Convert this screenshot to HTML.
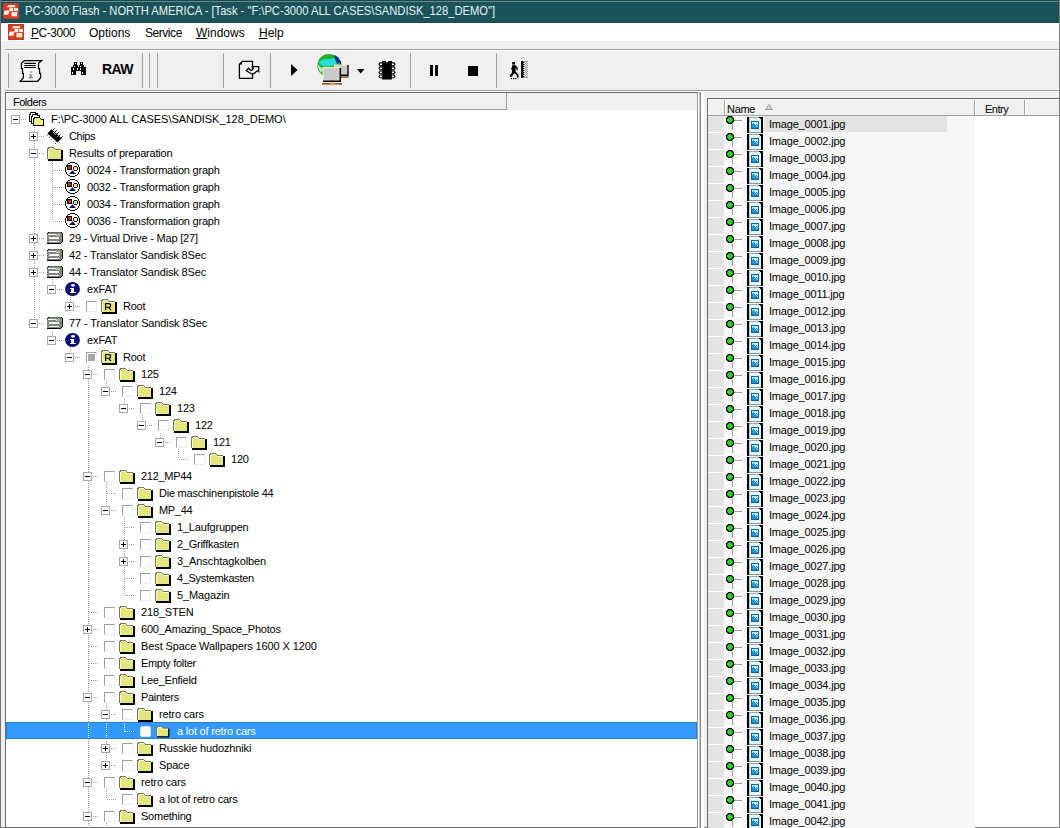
<!DOCTYPE html><html><head><meta charset="utf-8"><style>
*{margin:0;padding:0;box-sizing:border-box}
html,body{width:1060px;height:828px;overflow:hidden;background:#f0f0f0;font-family:"Liberation Sans",sans-serif;position:relative}
svg{position:absolute;overflow:visible}
.ab{position:absolute}
.t{position:absolute;white-space:pre;font-size:11px;line-height:13px;color:#000}
.m{position:absolute;white-space:pre;font-size:12px;line-height:14px;color:#000}
.box{position:absolute;width:9px;height:9px;border:1px solid #a8a8a8;background:#fff}
.box i{position:absolute;left:1px;top:3px;width:5px;height:1px;background:#000}
.box b{position:absolute;left:3px;top:1px;width:1px;height:5px;background:#000}
.cb{position:absolute;width:11px;height:11px;border-left:1px solid #a0a0a0;border-top:1px solid #a0a0a0;border-right:1px solid #eeeeee;border-bottom:1px solid #eeeeee;background:#fff}
.vd{position:absolute;width:1px;background-image:linear-gradient(#a0a0a0 50%,transparent 50%);background-size:1px 2px}
.hd{position:absolute;height:1px;background-image:linear-gradient(90deg,#a0a0a0 50%,transparent 50%);background-size:2px 1px}
.sep{position:absolute;top:53px;height:35px;width:1px;background:#a0a0a0}
.u{text-decoration:underline}
</style></head><body>
<div class="ab" style="left:0px;top:0px;width:1060px;height:23px;background:#1a535a;"></div>
<div class="ab" style="left:0px;top:0px;width:1060px;height:1px;background:#22474a;"></div>
<div class="ab" style="left:0px;top:1px;width:1060px;height:1px;background:#5c8c8c;"></div>
<div class="ab" style="left:0px;top:22px;width:1060px;height:1px;background:#1f4b50;"></div>
<div class="ab" style="left:0px;top:0px;width:1px;height:828px;background:#6f7575;"></div>
<div class="ab" style="left:1059px;top:0px;width:1px;height:828px;background:#808080;"></div>
<div class="ab" style="left:0px;top:827px;width:1060px;height:1px;background:#808080;"></div>
<svg style="left:3px;top:3px" width="16" height="16" viewBox="0 0 16 16"><rect x="0" y="0" width="16" height="16" fill="#dc3a1c"/><rect x="0.5" y="0.5" width="15" height="15" fill="none" stroke="#b04030" stroke-width="1"/><path d="M5.2 1.9H12.2V4.2H3.8Z" fill="#fbe2d8"/><path d="M6.6 4.7H10.1V8.3H6.1Z" fill="#fff0ea"/><path d="M10.8 5H15V8.1H10.8Z" fill="#fde8de"/><path d="M1.6 7.4H6.4L5.4 11.8H0.6Z" fill="#fff2ee"/><path d="M8.6 9H14.2V13.3H8.3Z" fill="#fde8de"/></svg>
<div class="m" style="left:25px;top:4px;color:#e8f4f4;font-size:12px;letter-spacing:0px;transform:scaleX(0.93);transform-origin:0 0">PC-3000 Flash - NORTH AMERICA - [Task - "F:\PC-3000 ALL CASES\SANDISK_128_DEMO"]</div>
<div class="ab" style="left:1px;top:23px;width:1058px;height:18px;background:#ffffff;"></div>
<svg style="left:8px;top:24px" width="16" height="16" viewBox="0 0 16 16"><rect x="0" y="0" width="16" height="16" fill="#dc3a1c"/><rect x="0.5" y="0.5" width="15" height="15" fill="none" stroke="#b04030" stroke-width="1"/><path d="M5.2 1.9H12.2V4.2H3.8Z" fill="#fbe2d8"/><path d="M6.6 4.7H10.1V8.3H6.1Z" fill="#fff0ea"/><path d="M10.8 5H15V8.1H10.8Z" fill="#fde8de"/><path d="M1.6 7.4H6.4L5.4 11.8H0.6Z" fill="#fff2ee"/><path d="M8.6 9H14.2V13.3H8.3Z" fill="#fde8de"/></svg>
<div class="m" style="left:31px;top:26px;letter-spacing:-0.45px"><span class="u">P</span>C-3000</div>
<div class="m" style="left:89px;top:26px;letter-spacing:0px">Options</div>
<div class="m" style="left:145px;top:26px;letter-spacing:-0.45px">Service</div>
<div class="m" style="left:196px;top:26px;letter-spacing:0px"><span class="u">W</span>indows</div>
<div class="m" style="left:259px;top:26px;letter-spacing:0px"><span class="u">H</span>elp</div>
<div class="ab" style="left:5px;top:49px;width:1054px;height:1px;background:#a0a0a0;"></div>
<div class="ab" style="left:5px;top:50px;width:1054px;height:1px;background:#ffffff;"></div>
<div class="ab" style="left:5px;top:90px;width:1054px;height:1px;background:#a0a0a0;"></div>
<div class="ab" style="left:5px;top:91px;width:1054px;height:1px;background:#ffffff;"></div>
<div class="sep" style="left:8px"></div>
<div class="sep" style="left:55px"></div>
<div class="sep" style="left:142px"></div>
<div class="sep" style="left:149px"></div>
<div class="sep" style="left:157px"></div>
<div class="sep" style="left:223px"></div>
<div class="sep" style="left:270px"></div>
<div class="sep" style="left:410px"></div>
<div class="sep" style="left:496px"></div>
<svg style="left:16px;top:56px" width="30" height="30" viewBox="0 0 30 30"><path d="M8.3 4.5H25.7L22.5 7.2V12.7H23.5V17.4H24.6V21.7L21.7 25.4H4.3L7.4 21.7V17.4H6.5V12.7H5.4V7.2Z" fill="#f6f6f6" stroke="#000" stroke-width="1.25" stroke-linejoin="miter"/><path d="M8.3 7.4H19.9M8.3 9.5H19.9M8.3 11.5H19.9" stroke="#000" stroke-width="1.1"/><rect x="14.2" y="15.2" width="1.6" height="1.6" fill="#8a8a8a"/><path d="M13.3 18.2H15.8V21H16.8V22.6H12.8V21H13.8V19.5H13.3Z" fill="#8a8a8a"/></svg>
<svg style="left:71px;top:62px" width="15" height="13" viewBox="0 0 15 13" shape-rendering="crispEdges"><path d="M3 0H6V3H7V5H8V3H9V0H12V3H13V5H15V13H10V9H5V13H0V5H2V3H3Z" fill="#000"/><g fill="#fff"><rect x="4" y="1" width="1" height="1"/><rect x="3" y="4" width="1" height="1"/><rect x="2" y="6" width="1" height="2"/><rect x="1" y="10" width="1" height="2"/><rect x="6" y="6" width="1" height="2"/><rect x="9" y="4" width="1" height="1"/><rect x="9" y="6" width="1" height="2"/><rect x="10" y="1" width="1" height="1"/><rect x="11" y="10" width="1" height="2"/></g></svg>
<div class="ab" style="left:102px;top:61px;font-size:14px;line-height:16px;font-weight:bold;letter-spacing:-0.6px;white-space:pre">RAW</div>
<svg style="left:234px;top:56px" width="30" height="30" viewBox="0 0 30 30"><path d="M8.3 5.4H18.5V22.3H5.4V8.3Z" fill="#f4f4f4" stroke="#000" stroke-width="1.3"/><path d="M7.6 6.4V8.2H6" fill="none" stroke="#000" stroke-width="0.9"/><path d="M12.2 14.6L14.6 12.2L16.8 14.4L18.2 14L19.3 12.2L18.4 10.6H24.7V15.6L23.5 14.6L20 17.5L17.2 17.7Z" fill="#fff" stroke="#000" stroke-width="1.3" stroke-linejoin="miter"/></svg>
<svg style="left:291px;top:64px" width="7" height="12" viewBox="0 0 7 12"><path d="M0 0L6.5 6L0 12Z" fill="#000"/></svg>
<svg style="left:312px;top:50px" width="44" height="40" viewBox="0 0 44 40"><circle cx="17" cy="15.5" r="11.6" fill="#20b02c"/><path d="M28 11 A11.6 11.6 0 0 1 26 23" fill="none" stroke="#000" stroke-width="1.2"/><path d="M6.5 12 Q12 8 18 9 Q23 8 27 7 L25 14 Q19 17 11 16 Q8 15 6.5 12Z" fill="#22e0d8"/><path d="M22 5 Q26 6 28.5 11 L25 14 Q23 10 22 5Z" fill="#1028a0"/><path d="M5.5 14 Q6 19 9 23 L11 19 Q8 17 5.5 14Z" fill="#c8e8c8"/><rect x="22.5" y="15" width="13.5" height="10" fill="#c8c8c8" stroke="#f2eebc" stroke-width="1"/><path d="M36 15V25.2H22.5" fill="none" stroke="#000" stroke-width="1.4"/><rect x="11" y="17.5" width="17" height="13.5" fill="#cacaca" stroke="#f4f0c0" stroke-width="1.1"/><path d="M28.3 18V31.3H11" fill="none" stroke="#000" stroke-width="1.5"/><path d="M10 33.8H30" stroke="#8a4a12" stroke-width="1.5"/><path d="M29 27H36.7" stroke="#8a4a12" stroke-width="1.5"/><rect x="18.5" y="32.6" width="4" height="2.6" fill="#e0a050"/></svg>
<svg style="left:357px;top:69px" width="8" height="5" viewBox="0 0 8 5"><path d="M0 0H7.5L3.75 4.5Z" fill="#000"/></svg>
<svg style="left:374px;top:56px" width="26" height="28" viewBox="0 0 26 28"><path d="M8.2 6.9H6L5 8.3L6 9.700000000000001H8.2" fill="#fff" stroke="#000" stroke-width="1.1"/><path d="M17.8 6.9H20L21 8.3L20 9.700000000000001H17.8" fill="#fff" stroke="#000" stroke-width="1.1"/><path d="M8.2 10.9H6L5 12.3L6 13.700000000000001H8.2" fill="#fff" stroke="#000" stroke-width="1.1"/><path d="M17.8 10.9H20L21 12.3L20 13.700000000000001H17.8" fill="#fff" stroke="#000" stroke-width="1.1"/><path d="M8.2 14.999999999999998H6L5 16.4L6 17.799999999999997H8.2" fill="#fff" stroke="#000" stroke-width="1.1"/><path d="M17.8 14.999999999999998H20L21 16.4L20 17.799999999999997H17.8" fill="#fff" stroke="#000" stroke-width="1.1"/><path d="M8.2 19.0H6L5 20.4L6 21.799999999999997H8.2" fill="#fff" stroke="#000" stroke-width="1.1"/><path d="M17.8 19.0H20L21 20.4L20 21.799999999999997H17.8" fill="#fff" stroke="#000" stroke-width="1.1"/><path d="M8.1 5.1H12V6.2H14V5.1H17.9V23.6H8.1Z" fill="#000"/></svg>
<div class="ab" style="left:430px;top:65px;width:3px;height:11px;background:#000;"></div>
<div class="ab" style="left:435px;top:65px;width:3px;height:11px;background:#000;"></div>
<div class="ab" style="left:468px;top:66px;width:10px;height:10px;background:#000;"></div>
<svg style="left:510px;top:61px" width="19" height="18" viewBox="0 0 19 18"><rect x="2.2" y="1" width="2.8" height="2.6" fill="#000"/><path d="M2 4.3H5.6L7.7 6.5V9.2H6.5V7.4L5.6 7V10.6L8.6 13.7V16.8H6.9V14.6L4.9 12.6L3.4 13.2L1.9 15.8H0V13.9L2 11.5V8.5L1.2 9V7.2L2 6.2Z" fill="#000"/><rect x="0.8" y="17" width="1.3" height="1.2" fill="#000"/><rect x="3" y="17" width="1.3" height="1.2" fill="#000"/><rect x="5.2" y="17" width="1.3" height="1.2" fill="#000"/></svg>
<svg style="left:521px;top:61px" width="7" height="17" viewBox="0 0 7 17" shape-rendering="crispEdges"><rect x="0" y="0" width="7" height="17" fill="#9a9a9a"/><rect x="4" y="1" width="1" height="1" fill="#e8e8e8"/><rect x="6" y="1" width="1" height="1" fill="#e8e8e8"/><rect x="3" y="2" width="1" height="1" fill="#e8e8e8"/><rect x="5" y="2" width="1" height="1" fill="#e8e8e8"/><rect x="4" y="3" width="1" height="1" fill="#e8e8e8"/><rect x="6" y="3" width="1" height="1" fill="#e8e8e8"/><rect x="3" y="4" width="1" height="1" fill="#e8e8e8"/><rect x="5" y="4" width="1" height="1" fill="#e8e8e8"/><rect x="4" y="5" width="1" height="1" fill="#e8e8e8"/><rect x="6" y="5" width="1" height="1" fill="#e8e8e8"/><rect x="3" y="6" width="1" height="1" fill="#e8e8e8"/><rect x="5" y="6" width="1" height="1" fill="#e8e8e8"/><rect x="4" y="7" width="1" height="1" fill="#e8e8e8"/><rect x="6" y="7" width="1" height="1" fill="#e8e8e8"/><rect x="3" y="8" width="1" height="1" fill="#e8e8e8"/><rect x="5" y="8" width="1" height="1" fill="#e8e8e8"/><rect x="4" y="9" width="1" height="1" fill="#e8e8e8"/><rect x="6" y="9" width="1" height="1" fill="#e8e8e8"/><rect x="3" y="10" width="1" height="1" fill="#e8e8e8"/><rect x="5" y="10" width="1" height="1" fill="#e8e8e8"/><rect x="4" y="11" width="1" height="1" fill="#e8e8e8"/><rect x="6" y="11" width="1" height="1" fill="#e8e8e8"/><rect x="3" y="12" width="1" height="1" fill="#e8e8e8"/><rect x="5" y="12" width="1" height="1" fill="#e8e8e8"/><rect x="4" y="13" width="1" height="1" fill="#e8e8e8"/><rect x="6" y="13" width="1" height="1" fill="#e8e8e8"/><rect x="3" y="14" width="1" height="1" fill="#e8e8e8"/><rect x="5" y="14" width="1" height="1" fill="#e8e8e8"/><rect x="4" y="15" width="1" height="1" fill="#e8e8e8"/><rect x="6" y="15" width="1" height="1" fill="#e8e8e8"/><rect x="0" y="0" width="2" height="17" fill="#000"/><rect x="2" y="1" width="1" height="1" fill="#000"/><rect x="2" y="3" width="1" height="1" fill="#000"/><rect x="2" y="5" width="1" height="1" fill="#000"/><rect x="2" y="7" width="1" height="1" fill="#000"/><rect x="2" y="9" width="1" height="1" fill="#000"/><rect x="2" y="11" width="1" height="1" fill="#000"/><rect x="2" y="13" width="1" height="1" fill="#000"/><rect x="2" y="15" width="1" height="1" fill="#000"/></svg>
<div class="ab" style="left:5px;top:92px;width:693px;height:736px;background:#696969;"></div>
<div class="ab" style="left:6px;top:93px;width:691px;height:734px;background:#ffffff;"></div>
<div class="ab" style="left:6px;top:93px;width:691px;height:17px;background:#f0f0f0;"></div>
<div class="ab" style="left:6px;top:93px;width:500px;height:1px;background:#ffffff;"></div>
<div class="ab" style="left:6px;top:93px;width:1px;height:16px;background:#ffffff;"></div>
<div class="ab" style="left:506px;top:93px;width:1px;height:17px;background:#a0a0a0;"></div>
<div class="ab" style="left:6px;top:109px;width:501px;height:1px;background:#a0a0a0;"></div>
<div class="t" style="left:13px;top:96px;letter-spacing:-0.5px">Folders</div>
<div class="ab" style="left:697px;top:92px;width:1px;height:736px;background:#9a9a9a;"></div>
<div class="ab" style="left:698px;top:92px;width:1px;height:736px;background:#ffffff;"></div>
<div class="ab" style="left:699px;top:92px;width:1px;height:736px;background:#c8c8c8;"></div>
<div class="ab" style="left:700px;top:92px;width:1px;height:736px;background:#8c8c8c;"></div>
<div class="ab" style="left:701px;top:92px;width:3px;height:736px;background:#ffffff;"></div>
<div class="ab" style="left:704px;top:93px;width:355px;height:734px;background:#f0f0f0;"></div>
<div class="ab" style="left:707px;top:98px;width:352px;height:729px;background:#696969;"></div>
<div class="ab" style="left:708px;top:99px;width:351px;height:728px;background:#ffffff;"></div>
<div class="ab" style="left:708px;top:99px;width:351px;height:16px;background:#f0f0f0;"></div>
<div class="ab" style="left:708px;top:115px;width:351px;height:1px;background:#a0a0a0;"></div>
<div class="ab" style="left:708px;top:99px;width:351px;height:1px;background:#ffffff;"></div>
<div class="ab" style="left:708px;top:99px;width:1px;height:16px;background:#ffffff;"></div>
<div class="ab" style="left:724px;top:100px;width:1px;height:15px;background:#a0a0a0;"></div>
<div class="ab" style="left:725px;top:100px;width:1px;height:15px;background:#ffffff;"></div>
<div class="ab" style="left:974px;top:100px;width:1px;height:15px;background:#a0a0a0;"></div>
<div class="ab" style="left:975px;top:100px;width:1px;height:15px;background:#ffffff;"></div>
<div class="ab" style="left:1024px;top:100px;width:1px;height:15px;background:#a0a0a0;"></div>
<div class="ab" style="left:1025px;top:100px;width:1px;height:15px;background:#ffffff;"></div>
<div class="t" style="left:727px;top:103px;letter-spacing:-0.3px">Name</div>
<svg style="left:765px;top:104px" width="8" height="6" viewBox="0 0 8 6"><path d="M0.5 5.5L4 0.5L7.5 5.5Z" fill="#d8d8d8" stroke="#9a9a9a" stroke-width="1"/></svg>
<div class="t" style="left:985px;top:103px;letter-spacing:-0.5px">Entry</div>
<div class="ab" style="left:6px;top:722px;width:691px;height:17px;background:#3399ff;border:1px solid #2a7ed4"></div>
<div class="vd" style="left:34px;top:127px;height:9px"></div>
<div class="vd" style="left:34px;top:127px;height:26px"></div>
<div class="vd" style="left:52px;top:161px;height:9px"></div>
<div class="vd" style="left:52px;top:161px;height:26px"></div>
<div class="vd" style="left:52px;top:161px;height:43px"></div>
<div class="vd" style="left:52px;top:161px;height:60px"></div>
<div class="vd" style="left:34px;top:127px;height:111px"></div>
<div class="vd" style="left:34px;top:127px;height:128px"></div>
<div class="vd" style="left:34px;top:127px;height:145px"></div>
<div class="vd" style="left:52px;top:279px;height:10px"></div>
<div class="vd" style="left:70px;top:297px;height:9px"></div>
<div class="vd" style="left:34px;top:127px;height:196px"></div>
<div class="vd" style="left:52px;top:331px;height:9px"></div>
<div class="vd" style="left:70px;top:347px;height:10px"></div>
<div class="vd" style="left:88px;top:365px;height:9px"></div>
<div class="vd" style="left:106px;top:381px;height:10px"></div>
<div class="vd" style="left:124px;top:399px;height:9px"></div>
<div class="vd" style="left:142px;top:415px;height:10px"></div>
<div class="vd" style="left:160px;top:433px;height:9px"></div>
<div class="vd" style="left:178px;top:449px;height:10px"></div>
<div class="vd" style="left:88px;top:365px;height:111px"></div>
<div class="vd" style="left:106px;top:483px;height:10px"></div>
<div class="vd" style="left:106px;top:483px;height:27px"></div>
<div class="vd" style="left:124px;top:517px;height:10px"></div>
<div class="vd" style="left:124px;top:517px;height:27px"></div>
<div class="vd" style="left:124px;top:517px;height:44px"></div>
<div class="vd" style="left:124px;top:517px;height:61px"></div>
<div class="vd" style="left:124px;top:517px;height:78px"></div>
<div class="vd" style="left:88px;top:365px;height:247px"></div>
<div class="vd" style="left:88px;top:365px;height:264px"></div>
<div class="vd" style="left:88px;top:365px;height:281px"></div>
<div class="vd" style="left:88px;top:365px;height:298px"></div>
<div class="vd" style="left:88px;top:365px;height:315px"></div>
<div class="vd" style="left:88px;top:365px;height:332px"></div>
<div class="vd" style="left:106px;top:705px;height:9px"></div>
<div class="vd" style="left:124px;top:721px;height:10px"></div>
<div class="vd" style="left:106px;top:705px;height:43px"></div>
<div class="vd" style="left:106px;top:705px;height:60px"></div>
<div class="vd" style="left:88px;top:365px;height:417px"></div>
<div class="vd" style="left:106px;top:789px;height:10px"></div>
<div class="vd" style="left:88px;top:365px;height:451px"></div>
<div class="vd" style="left:88px;top:817px;height:11px"></div>
<div class="vd" style="left:106px;top:823px;height:5px"></div>
<div class="hd" style="left:17px;top:119px;width:9px"></div>
<div class="box" style="left:11px;top:115px"><i></i></div>
<svg style="left:29px;top:112px" width="16" height="16" viewBox="0 0 16 16" shape-rendering="crispEdges"><path d="M0.5 9.5V2.5H1.5V0.5H6.5V1.5H8.5V9.5Z" fill="#fffbe6" stroke="#000"/><path d="M2.5 11.5V4.5H3.5V2.5H8.5V3.5H10.5V11.5Z" fill="#fffbe6" stroke="#000"/><path d="M4.5 13.5V6.5H5.5V5.5H10.5L12.5 7.5H14.5V13.5Z" fill="#eef088" stroke="#000" stroke-width="1.3"/></svg>
<div class="t" style="left:51px;top:113px;color:#000;letter-spacing:-0.041px">F:\PC-3000 ALL CASES\SANDISK_128_DEMO\</div>
<div class="hd" style="left:35px;top:136px;width:9px"></div>
<div class="box" style="left:29px;top:132px"><i></i><b></b></div>
<svg style="left:47px;top:127px" width="18" height="18" viewBox="0 0 18 18"><path d="M4.5 2.2L14.6 11.2L10.6 15.6L0.4 6.4Z" fill="#000"/><rect x="6" y="2" width="1" height="1" fill="#000"/><rect x="8" y="4" width="1" height="1" fill="#000"/><rect x="10" y="6" width="1" height="1" fill="#000"/><rect x="12" y="8" width="1" height="1" fill="#000"/><rect x="14" y="10" width="1" height="1" fill="#000"/><rect x="7" y="1" width="1" height="1" fill="#6a6a40"/><rect x="9" y="3" width="1" height="1" fill="#6a6a40"/><rect x="11" y="5" width="1" height="1" fill="#6a6a40"/><rect x="13" y="7" width="1" height="1" fill="#6a6a40"/><rect x="15" y="9" width="1" height="1" fill="#6a6a40"/><rect x="0" y="8" width="1" height="1" fill="#6a6a40"/><rect x="2" y="10" width="1" height="1" fill="#6a6a40"/><rect x="4" y="12" width="1" height="1" fill="#6a6a40"/><rect x="6" y="14" width="1" height="1" fill="#6a6a40"/><rect x="8" y="16" width="1" height="1" fill="#6a6a40"/><rect x="6" y="5" width="1" height="1" fill="#aaa"/><rect x="7" y="6" width="1" height="1" fill="#aaa"/><rect x="8" y="7" width="1" height="1" fill="#aaa"/><rect x="10" y="9" width="1" height="1" fill="#aaa"/></svg>
<div class="t" style="left:69px;top:130px;color:#000;letter-spacing:-0.425px">Chips</div>
<div class="hd" style="left:35px;top:153px;width:9px"></div>
<div class="box" style="left:29px;top:149px"><i></i></div>
<svg style="left:47px;top:147px" width="16" height="14" viewBox="0 0 16 14" shape-rendering="crispEdges"><path d="M1 1H7V2H8V3H14V12H1Z" fill="#e6e67e"/><rect x="1" y="1" width="6" height="1" fill="#f8f8c8"/><rect x="1" y="2" width="1" height="10" fill="#f8f8c8"/><rect x="8" y="3" width="6" height="1" fill="#f8f8c8"/><path d="M0.5 12V1.5H1.5V0.5H6.5L8.5 2.5H13.5" fill="none" stroke="#76765a" stroke-width="1"/><path d="M14 3H15.5V13.5H1V12H14Z" fill="#000"/></svg>
<div class="t" style="left:69px;top:147px;color:#000;letter-spacing:-0.19px">Results of preparation</div>
<div class="hd" style="left:53px;top:170px;width:9px"></div>
<svg style="left:65px;top:162px" width="15" height="15" viewBox="0 0 15 15" shape-rendering="crispEdges"><path d="M5 1H10V2H12V3H13V5H14V10H13V12H12V13H10V14H5V13H3V12H2V10H1V5H2V3H3V2H5Z" fill="#fff"/><path d="M5 0H10V1H12V2H13V3H14V5H15V10H14V12H13V13H12V14H10V15H5V14H3V13H2V12H1V10H0V5H1V3H2V2H3V1H5Z M5 1V2H3V3H2V5H1V10H2V12H3V13H5V14H10V13H12V12H13V10H14V5H13V3H12V2H10V1Z" fill="#000" fill-rule="evenodd"/><rect x="2" y="3" width="5" height="5" fill="#000"/><rect x="3" y="4" width="3" height="3" fill="#c8282c"/><path d="M9 4H12V5H13V8H12V9H9V8H8V5H9Z" fill="#000"/><rect x="9" y="5" width="3" height="3" fill="#eeee80"/></svg><svg style="left:65px;top:162px" width="15" height="15" viewBox="0 0 15 15"><path d="M7.5 8.2L11 12H4Z" fill="#10105e"/></svg>
<div class="t" style="left:87px;top:164px;color:#000;letter-spacing:-0.231px">0024 - Transformation graph</div>
<div class="hd" style="left:53px;top:187px;width:9px"></div>
<svg style="left:65px;top:179px" width="15" height="15" viewBox="0 0 15 15" shape-rendering="crispEdges"><path d="M5 1H10V2H12V3H13V5H14V10H13V12H12V13H10V14H5V13H3V12H2V10H1V5H2V3H3V2H5Z" fill="#fff"/><path d="M5 0H10V1H12V2H13V3H14V5H15V10H14V12H13V13H12V14H10V15H5V14H3V13H2V12H1V10H0V5H1V3H2V2H3V1H5Z M5 1V2H3V3H2V5H1V10H2V12H3V13H5V14H10V13H12V12H13V10H14V5H13V3H12V2H10V1Z" fill="#000" fill-rule="evenodd"/><rect x="2" y="3" width="5" height="5" fill="#000"/><rect x="3" y="4" width="3" height="3" fill="#c8282c"/><path d="M9 4H12V5H13V8H12V9H9V8H8V5H9Z" fill="#000"/><rect x="9" y="5" width="3" height="3" fill="#eeee80"/></svg><svg style="left:65px;top:179px" width="15" height="15" viewBox="0 0 15 15"><path d="M7.5 8.2L11 12H4Z" fill="#10105e"/></svg>
<div class="t" style="left:87px;top:181px;color:#000;letter-spacing:-0.231px">0032 - Transformation graph</div>
<div class="hd" style="left:53px;top:204px;width:9px"></div>
<svg style="left:65px;top:196px" width="15" height="15" viewBox="0 0 15 15" shape-rendering="crispEdges"><path d="M5 1H10V2H12V3H13V5H14V10H13V12H12V13H10V14H5V13H3V12H2V10H1V5H2V3H3V2H5Z" fill="#fff"/><path d="M5 0H10V1H12V2H13V3H14V5H15V10H14V12H13V13H12V14H10V15H5V14H3V13H2V12H1V10H0V5H1V3H2V2H3V1H5Z M5 1V2H3V3H2V5H1V10H2V12H3V13H5V14H10V13H12V12H13V10H14V5H13V3H12V2H10V1Z" fill="#000" fill-rule="evenodd"/><rect x="2" y="3" width="5" height="5" fill="#000"/><rect x="3" y="4" width="3" height="3" fill="#c8282c"/><path d="M9 4H12V5H13V8H12V9H9V8H8V5H9Z" fill="#000"/><rect x="9" y="5" width="3" height="3" fill="#eeee80"/></svg><svg style="left:65px;top:196px" width="15" height="15" viewBox="0 0 15 15"><path d="M7.5 8.2L11 12H4Z" fill="#10105e"/></svg>
<div class="t" style="left:87px;top:198px;color:#000;letter-spacing:-0.231px">0034 - Transformation graph</div>
<div class="hd" style="left:53px;top:221px;width:9px"></div>
<svg style="left:65px;top:213px" width="15" height="15" viewBox="0 0 15 15" shape-rendering="crispEdges"><path d="M5 1H10V2H12V3H13V5H14V10H13V12H12V13H10V14H5V13H3V12H2V10H1V5H2V3H3V2H5Z" fill="#fff"/><path d="M5 0H10V1H12V2H13V3H14V5H15V10H14V12H13V13H12V14H10V15H5V14H3V13H2V12H1V10H0V5H1V3H2V2H3V1H5Z M5 1V2H3V3H2V5H1V10H2V12H3V13H5V14H10V13H12V12H13V10H14V5H13V3H12V2H10V1Z" fill="#000" fill-rule="evenodd"/><rect x="2" y="3" width="5" height="5" fill="#000"/><rect x="3" y="4" width="3" height="3" fill="#c8282c"/><path d="M9 4H12V5H13V8H12V9H9V8H8V5H9Z" fill="#000"/><rect x="9" y="5" width="3" height="3" fill="#eeee80"/></svg><svg style="left:65px;top:213px" width="15" height="15" viewBox="0 0 15 15"><path d="M7.5 8.2L11 12H4Z" fill="#10105e"/></svg>
<div class="t" style="left:87px;top:215px;color:#000;letter-spacing:-0.231px">0036 - Transformation graph</div>
<div class="hd" style="left:35px;top:238px;width:9px"></div>
<div class="box" style="left:29px;top:234px"><i></i><b></b></div>
<svg style="left:47px;top:232px" width="16" height="12" viewBox="0 0 16 12" shape-rendering="crispEdges"><path d="M2 0H15V1H16V10H15V11H14V12H0V1H1V0Z" fill="#000"/><path d="M2 0H14V1H15V10H14V11H0V2H1V1H2Z" fill="#858585"/><rect x="2" y="0" width="12" height="1" fill="#6a6a6a"/><rect x="1" y="2" width="12" height="1" fill="#f6f6f6"/><rect x="2" y="5" width="10" height="2" fill="#fafafa"/><rect x="2" y="9" width="10" height="1" fill="#f6f6f6"/><rect x="9" y="2" width="4" height="2" fill="#9ad08a"/></svg>
<div class="t" style="left:69px;top:232px;color:#000;letter-spacing:-0.189px">29 - Virtual Drive - Map [27]</div>
<div class="hd" style="left:35px;top:255px;width:9px"></div>
<div class="box" style="left:29px;top:251px"><i></i><b></b></div>
<svg style="left:47px;top:249px" width="16" height="12" viewBox="0 0 16 12" shape-rendering="crispEdges"><path d="M2 0H15V1H16V10H15V11H14V12H0V1H1V0Z" fill="#000"/><path d="M2 0H14V1H15V10H14V11H0V2H1V1H2Z" fill="#858585"/><rect x="2" y="0" width="12" height="1" fill="#6a6a6a"/><rect x="1" y="2" width="12" height="1" fill="#f6f6f6"/><rect x="2" y="5" width="10" height="2" fill="#fafafa"/><rect x="2" y="9" width="10" height="1" fill="#f6f6f6"/><rect x="9" y="2" width="4" height="2" fill="#9ad08a"/></svg>
<div class="t" style="left:69px;top:249px;color:#000;letter-spacing:-0.152px">42 - Translator Sandisk 8Sec</div>
<div class="hd" style="left:35px;top:272px;width:9px"></div>
<div class="box" style="left:29px;top:268px"><i></i><b></b></div>
<svg style="left:47px;top:266px" width="16" height="12" viewBox="0 0 16 12" shape-rendering="crispEdges"><path d="M2 0H15V1H16V10H15V11H14V12H0V1H1V0Z" fill="#000"/><path d="M2 0H14V1H15V10H14V11H0V2H1V1H2Z" fill="#858585"/><rect x="2" y="0" width="12" height="1" fill="#6a6a6a"/><rect x="1" y="2" width="12" height="1" fill="#f6f6f6"/><rect x="2" y="5" width="10" height="2" fill="#fafafa"/><rect x="2" y="9" width="10" height="1" fill="#f6f6f6"/><rect x="9" y="2" width="4" height="2" fill="#9ad08a"/></svg>
<div class="t" style="left:69px;top:266px;color:#000;letter-spacing:-0.152px">44 - Translator Sandisk 8Sec</div>
<div class="hd" style="left:53px;top:289px;width:9px"></div>
<div class="box" style="left:47px;top:285px"><i></i></div>
<svg style="left:65px;top:282px" width="15" height="14" viewBox="0 0 15 14"><ellipse cx="7.5" cy="7" rx="7.4" ry="7" fill="#06065a"/><ellipse cx="7.5" cy="7" rx="6.4" ry="6" fill="#0c0c80"/><ellipse cx="8" cy="3.3" rx="2" ry="1.4" fill="#fff"/><path d="M5 6H9V10H10.8V11H5V10H6.2V7H5Z" fill="#fff"/></svg>
<div class="t" style="left:87px;top:283px;color:#000;letter-spacing:-0.1px">exFAT</div>
<div class="hd" style="left:71px;top:306px;width:9px"></div>
<div class="box" style="left:65px;top:302px"><i></i><b></b></div>
<div class="cb" style="left:86px;top:301px"></div>
<svg style="left:101px;top:299px" width="16" height="15" viewBox="0 0 16 15" shape-rendering="crispEdges"><path d="M1 1H7V2H8V3H14V13H1Z" fill="#e6e67e"/><rect x="1" y="1" width="6" height="1" fill="#f8f8c8"/><rect x="1" y="2" width="1" height="11" fill="#f8f8c8"/><rect x="8" y="3" width="6" height="1" fill="#f8f8c8"/><path d="M0.5 13V1.5H1.5V0.5H6.5L8.5 2.5H13.5" fill="none" stroke="#76765a" stroke-width="1"/><path d="M14 3H15.5V14.5H1V13H14Z" fill="#000"/><path d="M4.6 11V4.6H7.6Q9.6 4.6 9.6 6.4T7.6 8.2H4.6M7.4 8.2L9.9 11" fill="none" stroke="#000" stroke-width="1.15" shape-rendering="geometricPrecision"/></svg>
<div class="t" style="left:123px;top:300px;color:#000;letter-spacing:-0.267px">Root</div>
<div class="hd" style="left:35px;top:323px;width:9px"></div>
<div class="box" style="left:29px;top:319px"><i></i></div>
<svg style="left:47px;top:317px" width="16" height="12" viewBox="0 0 16 12" shape-rendering="crispEdges"><path d="M2 0H15V1H16V10H15V11H14V12H0V1H1V0Z" fill="#000"/><path d="M2 0H14V1H15V10H14V11H0V2H1V1H2Z" fill="#858585"/><rect x="2" y="0" width="12" height="1" fill="#6a6a6a"/><rect x="1" y="2" width="12" height="1" fill="#f6f6f6"/><rect x="2" y="5" width="10" height="2" fill="#fafafa"/><rect x="2" y="9" width="10" height="1" fill="#f6f6f6"/><rect x="9" y="2" width="4" height="2" fill="#9ad08a"/></svg>
<div class="t" style="left:69px;top:317px;color:#000;letter-spacing:-0.115px">77 - Translator Sandisk 8Sec</div>
<div class="hd" style="left:53px;top:340px;width:9px"></div>
<div class="box" style="left:47px;top:336px"><i></i></div>
<svg style="left:65px;top:333px" width="15" height="14" viewBox="0 0 15 14"><ellipse cx="7.5" cy="7" rx="7.4" ry="7" fill="#06065a"/><ellipse cx="7.5" cy="7" rx="6.4" ry="6" fill="#0c0c80"/><ellipse cx="8" cy="3.3" rx="2" ry="1.4" fill="#fff"/><path d="M5 6H9V10H10.8V11H5V10H6.2V7H5Z" fill="#fff"/></svg>
<div class="t" style="left:87px;top:334px;color:#000;letter-spacing:-0.1px">exFAT</div>
<div class="hd" style="left:71px;top:357px;width:9px"></div>
<div class="box" style="left:65px;top:353px"><i></i></div>
<div class="cb" style="left:86px;top:352px"><div class="ab" style="left:1px;top:1px;width:7px;height:7px;background:#a6a6a6"></div></div>
<svg style="left:101px;top:350px" width="16" height="15" viewBox="0 0 16 15" shape-rendering="crispEdges"><path d="M1 1H7V2H8V3H14V13H1Z" fill="#e6e67e"/><rect x="1" y="1" width="6" height="1" fill="#f8f8c8"/><rect x="1" y="2" width="1" height="11" fill="#f8f8c8"/><rect x="8" y="3" width="6" height="1" fill="#f8f8c8"/><path d="M0.5 13V1.5H1.5V0.5H6.5L8.5 2.5H13.5" fill="none" stroke="#76765a" stroke-width="1"/><path d="M14 3H15.5V14.5H1V13H14Z" fill="#000"/><path d="M4.6 11V4.6H7.6Q9.6 4.6 9.6 6.4T7.6 8.2H4.6M7.4 8.2L9.9 11" fill="none" stroke="#000" stroke-width="1.15" shape-rendering="geometricPrecision"/></svg>
<div class="t" style="left:123px;top:351px;color:#000;letter-spacing:-0.267px">Root</div>
<div class="hd" style="left:89px;top:374px;width:9px"></div>
<div class="box" style="left:83px;top:370px"><i></i></div>
<div class="cb" style="left:104px;top:369px"></div>
<svg style="left:119px;top:368px" width="16" height="14" viewBox="0 0 16 14" shape-rendering="crispEdges"><path d="M1 1H7V2H8V3H14V12H1Z" fill="#e6e67e"/><rect x="1" y="1" width="6" height="1" fill="#f8f8c8"/><rect x="1" y="2" width="1" height="10" fill="#f8f8c8"/><rect x="8" y="3" width="6" height="1" fill="#f8f8c8"/><path d="M0.5 12V1.5H1.5V0.5H6.5L8.5 2.5H13.5" fill="none" stroke="#76765a" stroke-width="1"/><path d="M14 3H15.5V13.5H1V12H14Z" fill="#000"/></svg>
<div class="t" style="left:141px;top:368px;color:#000;letter-spacing:-0.2px">125</div>
<div class="hd" style="left:107px;top:391px;width:9px"></div>
<div class="box" style="left:101px;top:387px"><i></i></div>
<div class="cb" style="left:122px;top:386px"></div>
<svg style="left:137px;top:385px" width="16" height="14" viewBox="0 0 16 14" shape-rendering="crispEdges"><path d="M1 1H7V2H8V3H14V12H1Z" fill="#e6e67e"/><rect x="1" y="1" width="6" height="1" fill="#f8f8c8"/><rect x="1" y="2" width="1" height="10" fill="#f8f8c8"/><rect x="8" y="3" width="6" height="1" fill="#f8f8c8"/><path d="M0.5 12V1.5H1.5V0.5H6.5L8.5 2.5H13.5" fill="none" stroke="#76765a" stroke-width="1"/><path d="M14 3H15.5V13.5H1V12H14Z" fill="#000"/></svg>
<div class="t" style="left:159px;top:385px;color:#000;letter-spacing:-0.2px">124</div>
<div class="hd" style="left:125px;top:408px;width:9px"></div>
<div class="box" style="left:119px;top:404px"><i></i></div>
<div class="cb" style="left:140px;top:403px"></div>
<svg style="left:155px;top:402px" width="16" height="14" viewBox="0 0 16 14" shape-rendering="crispEdges"><path d="M1 1H7V2H8V3H14V12H1Z" fill="#e6e67e"/><rect x="1" y="1" width="6" height="1" fill="#f8f8c8"/><rect x="1" y="2" width="1" height="10" fill="#f8f8c8"/><rect x="8" y="3" width="6" height="1" fill="#f8f8c8"/><path d="M0.5 12V1.5H1.5V0.5H6.5L8.5 2.5H13.5" fill="none" stroke="#76765a" stroke-width="1"/><path d="M14 3H15.5V13.5H1V12H14Z" fill="#000"/></svg>
<div class="t" style="left:177px;top:402px;color:#000;letter-spacing:-0.2px">123</div>
<div class="hd" style="left:143px;top:425px;width:9px"></div>
<div class="box" style="left:137px;top:421px"><i></i></div>
<div class="cb" style="left:158px;top:420px"></div>
<svg style="left:173px;top:419px" width="16" height="14" viewBox="0 0 16 14" shape-rendering="crispEdges"><path d="M1 1H7V2H8V3H14V12H1Z" fill="#e6e67e"/><rect x="1" y="1" width="6" height="1" fill="#f8f8c8"/><rect x="1" y="2" width="1" height="10" fill="#f8f8c8"/><rect x="8" y="3" width="6" height="1" fill="#f8f8c8"/><path d="M0.5 12V1.5H1.5V0.5H6.5L8.5 2.5H13.5" fill="none" stroke="#76765a" stroke-width="1"/><path d="M14 3H15.5V13.5H1V12H14Z" fill="#000"/></svg>
<div class="t" style="left:195px;top:419px;color:#000;letter-spacing:-0.2px">122</div>
<div class="hd" style="left:161px;top:442px;width:9px"></div>
<div class="box" style="left:155px;top:438px"><i></i></div>
<div class="cb" style="left:176px;top:437px"></div>
<svg style="left:191px;top:436px" width="16" height="14" viewBox="0 0 16 14" shape-rendering="crispEdges"><path d="M1 1H7V2H8V3H14V12H1Z" fill="#e6e67e"/><rect x="1" y="1" width="6" height="1" fill="#f8f8c8"/><rect x="1" y="2" width="1" height="10" fill="#f8f8c8"/><rect x="8" y="3" width="6" height="1" fill="#f8f8c8"/><path d="M0.5 12V1.5H1.5V0.5H6.5L8.5 2.5H13.5" fill="none" stroke="#76765a" stroke-width="1"/><path d="M14 3H15.5V13.5H1V12H14Z" fill="#000"/></svg>
<div class="t" style="left:213px;top:436px;color:#000;letter-spacing:-0.2px">121</div>
<div class="hd" style="left:179px;top:459px;width:9px"></div>
<div class="cb" style="left:194px;top:454px"></div>
<svg style="left:209px;top:453px" width="16" height="14" viewBox="0 0 16 14" shape-rendering="crispEdges"><path d="M1 1H7V2H8V3H14V12H1Z" fill="#e6e67e"/><rect x="1" y="1" width="6" height="1" fill="#f8f8c8"/><rect x="1" y="2" width="1" height="10" fill="#f8f8c8"/><rect x="8" y="3" width="6" height="1" fill="#f8f8c8"/><path d="M0.5 12V1.5H1.5V0.5H6.5L8.5 2.5H13.5" fill="none" stroke="#76765a" stroke-width="1"/><path d="M14 3H15.5V13.5H1V12H14Z" fill="#000"/></svg>
<div class="t" style="left:231px;top:453px;color:#000;letter-spacing:-0.2px">120</div>
<div class="hd" style="left:89px;top:476px;width:9px"></div>
<div class="box" style="left:83px;top:472px"><i></i></div>
<div class="cb" style="left:104px;top:471px"></div>
<svg style="left:119px;top:470px" width="16" height="14" viewBox="0 0 16 14" shape-rendering="crispEdges"><path d="M1 1H7V2H8V3H14V12H1Z" fill="#e6e67e"/><rect x="1" y="1" width="6" height="1" fill="#f8f8c8"/><rect x="1" y="2" width="1" height="10" fill="#f8f8c8"/><rect x="8" y="3" width="6" height="1" fill="#f8f8c8"/><path d="M0.5 12V1.5H1.5V0.5H6.5L8.5 2.5H13.5" fill="none" stroke="#76765a" stroke-width="1"/><path d="M14 3H15.5V13.5H1V12H14Z" fill="#000"/></svg>
<div class="t" style="left:141px;top:470px;color:#000;letter-spacing:-0.286px">212_MP44</div>
<div class="hd" style="left:107px;top:493px;width:9px"></div>
<div class="cb" style="left:122px;top:488px"></div>
<svg style="left:137px;top:487px" width="16" height="14" viewBox="0 0 16 14" shape-rendering="crispEdges"><path d="M1 1H7V2H8V3H14V12H1Z" fill="#e6e67e"/><rect x="1" y="1" width="6" height="1" fill="#f8f8c8"/><rect x="1" y="2" width="1" height="10" fill="#f8f8c8"/><rect x="8" y="3" width="6" height="1" fill="#f8f8c8"/><path d="M0.5 12V1.5H1.5V0.5H6.5L8.5 2.5H13.5" fill="none" stroke="#76765a" stroke-width="1"/><path d="M14 3H15.5V13.5H1V12H14Z" fill="#000"/></svg>
<div class="t" style="left:159px;top:487px;color:#000;letter-spacing:-0.236px">Die maschinenpistole 44</div>
<div class="hd" style="left:107px;top:510px;width:9px"></div>
<div class="box" style="left:101px;top:506px"><i></i></div>
<div class="cb" style="left:122px;top:505px"></div>
<svg style="left:137px;top:504px" width="16" height="14" viewBox="0 0 16 14" shape-rendering="crispEdges"><path d="M1 1H7V2H8V3H14V12H1Z" fill="#e6e67e"/><rect x="1" y="1" width="6" height="1" fill="#f8f8c8"/><rect x="1" y="2" width="1" height="10" fill="#f8f8c8"/><rect x="8" y="3" width="6" height="1" fill="#f8f8c8"/><path d="M0.5 12V1.5H1.5V0.5H6.5L8.5 2.5H13.5" fill="none" stroke="#76765a" stroke-width="1"/><path d="M14 3H15.5V13.5H1V12H14Z" fill="#000"/></svg>
<div class="t" style="left:159px;top:504px;color:#000;letter-spacing:-0.325px">MP_44</div>
<div class="hd" style="left:125px;top:527px;width:9px"></div>
<div class="cb" style="left:140px;top:522px"></div>
<svg style="left:155px;top:521px" width="16" height="14" viewBox="0 0 16 14" shape-rendering="crispEdges"><path d="M1 1H7V2H8V3H14V12H1Z" fill="#e6e67e"/><rect x="1" y="1" width="6" height="1" fill="#f8f8c8"/><rect x="1" y="2" width="1" height="10" fill="#f8f8c8"/><rect x="8" y="3" width="6" height="1" fill="#f8f8c8"/><path d="M0.5 12V1.5H1.5V0.5H6.5L8.5 2.5H13.5" fill="none" stroke="#76765a" stroke-width="1"/><path d="M14 3H15.5V13.5H1V12H14Z" fill="#000"/></svg>
<div class="t" style="left:177px;top:521px;color:#000;letter-spacing:-0.192px">1_Laufgruppen</div>
<div class="hd" style="left:125px;top:544px;width:9px"></div>
<div class="box" style="left:119px;top:540px"><i></i><b></b></div>
<div class="cb" style="left:140px;top:539px"></div>
<svg style="left:155px;top:538px" width="16" height="14" viewBox="0 0 16 14" shape-rendering="crispEdges"><path d="M1 1H7V2H8V3H14V12H1Z" fill="#e6e67e"/><rect x="1" y="1" width="6" height="1" fill="#f8f8c8"/><rect x="1" y="2" width="1" height="10" fill="#f8f8c8"/><rect x="8" y="3" width="6" height="1" fill="#f8f8c8"/><path d="M0.5 12V1.5H1.5V0.5H6.5L8.5 2.5H13.5" fill="none" stroke="#76765a" stroke-width="1"/><path d="M14 3H15.5V13.5H1V12H14Z" fill="#000"/></svg>
<div class="t" style="left:177px;top:538px;color:#000;letter-spacing:-0.267px">2_Griffkasten</div>
<div class="hd" style="left:125px;top:561px;width:9px"></div>
<div class="box" style="left:119px;top:557px"><i></i><b></b></div>
<div class="cb" style="left:140px;top:556px"></div>
<svg style="left:155px;top:555px" width="16" height="14" viewBox="0 0 16 14" shape-rendering="crispEdges"><path d="M1 1H7V2H8V3H14V12H1Z" fill="#e6e67e"/><rect x="1" y="1" width="6" height="1" fill="#f8f8c8"/><rect x="1" y="2" width="1" height="10" fill="#f8f8c8"/><rect x="8" y="3" width="6" height="1" fill="#f8f8c8"/><path d="M0.5 12V1.5H1.5V0.5H6.5L8.5 2.5H13.5" fill="none" stroke="#76765a" stroke-width="1"/><path d="M14 3H15.5V13.5H1V12H14Z" fill="#000"/></svg>
<div class="t" style="left:177px;top:555px;color:#000;letter-spacing:-0.087px">3_Anschtagkolben</div>
<div class="hd" style="left:125px;top:578px;width:9px"></div>
<div class="cb" style="left:140px;top:573px"></div>
<svg style="left:155px;top:572px" width="16" height="14" viewBox="0 0 16 14" shape-rendering="crispEdges"><path d="M1 1H7V2H8V3H14V12H1Z" fill="#e6e67e"/><rect x="1" y="1" width="6" height="1" fill="#f8f8c8"/><rect x="1" y="2" width="1" height="10" fill="#f8f8c8"/><rect x="8" y="3" width="6" height="1" fill="#f8f8c8"/><path d="M0.5 12V1.5H1.5V0.5H6.5L8.5 2.5H13.5" fill="none" stroke="#76765a" stroke-width="1"/><path d="M14 3H15.5V13.5H1V12H14Z" fill="#000"/></svg>
<div class="t" style="left:177px;top:572px;color:#000;letter-spacing:-0.323px">4_Systemkasten</div>
<div class="hd" style="left:125px;top:595px;width:9px"></div>
<div class="cb" style="left:140px;top:590px"></div>
<svg style="left:155px;top:589px" width="16" height="14" viewBox="0 0 16 14" shape-rendering="crispEdges"><path d="M1 1H7V2H8V3H14V12H1Z" fill="#e6e67e"/><rect x="1" y="1" width="6" height="1" fill="#f8f8c8"/><rect x="1" y="2" width="1" height="10" fill="#f8f8c8"/><rect x="8" y="3" width="6" height="1" fill="#f8f8c8"/><path d="M0.5 12V1.5H1.5V0.5H6.5L8.5 2.5H13.5" fill="none" stroke="#76765a" stroke-width="1"/><path d="M14 3H15.5V13.5H1V12H14Z" fill="#000"/></svg>
<div class="t" style="left:177px;top:589px;color:#000;letter-spacing:-0.138px">5_Magazin</div>
<div class="hd" style="left:89px;top:612px;width:9px"></div>
<div class="cb" style="left:104px;top:607px"></div>
<svg style="left:119px;top:606px" width="16" height="14" viewBox="0 0 16 14" shape-rendering="crispEdges"><path d="M1 1H7V2H8V3H14V12H1Z" fill="#e6e67e"/><rect x="1" y="1" width="6" height="1" fill="#f8f8c8"/><rect x="1" y="2" width="1" height="10" fill="#f8f8c8"/><rect x="8" y="3" width="6" height="1" fill="#f8f8c8"/><path d="M0.5 12V1.5H1.5V0.5H6.5L8.5 2.5H13.5" fill="none" stroke="#76765a" stroke-width="1"/><path d="M14 3H15.5V13.5H1V12H14Z" fill="#000"/></svg>
<div class="t" style="left:141px;top:606px;color:#000;letter-spacing:-0.157px">218_STEN</div>
<div class="hd" style="left:89px;top:629px;width:9px"></div>
<div class="box" style="left:83px;top:625px"><i></i><b></b></div>
<div class="cb" style="left:104px;top:624px"></div>
<svg style="left:119px;top:623px" width="16" height="14" viewBox="0 0 16 14" shape-rendering="crispEdges"><path d="M1 1H7V2H8V3H14V12H1Z" fill="#e6e67e"/><rect x="1" y="1" width="6" height="1" fill="#f8f8c8"/><rect x="1" y="2" width="1" height="10" fill="#f8f8c8"/><rect x="8" y="3" width="6" height="1" fill="#f8f8c8"/><path d="M0.5 12V1.5H1.5V0.5H6.5L8.5 2.5H13.5" fill="none" stroke="#76765a" stroke-width="1"/><path d="M14 3H15.5V13.5H1V12H14Z" fill="#000"/></svg>
<div class="t" style="left:141px;top:623px;color:#000;letter-spacing:-0.217px">600_Amazing_Space_Photos</div>
<div class="hd" style="left:89px;top:646px;width:9px"></div>
<div class="cb" style="left:104px;top:641px"></div>
<svg style="left:119px;top:640px" width="16" height="14" viewBox="0 0 16 14" shape-rendering="crispEdges"><path d="M1 1H7V2H8V3H14V12H1Z" fill="#e6e67e"/><rect x="1" y="1" width="6" height="1" fill="#f8f8c8"/><rect x="1" y="2" width="1" height="10" fill="#f8f8c8"/><rect x="8" y="3" width="6" height="1" fill="#f8f8c8"/><path d="M0.5 12V1.5H1.5V0.5H6.5L8.5 2.5H13.5" fill="none" stroke="#76765a" stroke-width="1"/><path d="M14 3H15.5V13.5H1V12H14Z" fill="#000"/></svg>
<div class="t" style="left:141px;top:640px;color:#000;letter-spacing:-0.109px">Best Space Wallpapers 1600 X 1200</div>
<div class="hd" style="left:89px;top:663px;width:9px"></div>
<div class="cb" style="left:104px;top:658px"></div>
<svg style="left:119px;top:657px" width="16" height="14" viewBox="0 0 16 14" shape-rendering="crispEdges"><path d="M1 1H7V2H8V3H14V12H1Z" fill="#e6e67e"/><rect x="1" y="1" width="6" height="1" fill="#f8f8c8"/><rect x="1" y="2" width="1" height="10" fill="#f8f8c8"/><rect x="8" y="3" width="6" height="1" fill="#f8f8c8"/><path d="M0.5 12V1.5H1.5V0.5H6.5L8.5 2.5H13.5" fill="none" stroke="#76765a" stroke-width="1"/><path d="M14 3H15.5V13.5H1V12H14Z" fill="#000"/></svg>
<div class="t" style="left:141px;top:657px;color:#000;letter-spacing:-0.327px">Empty folter</div>
<div class="hd" style="left:89px;top:680px;width:9px"></div>
<div class="cb" style="left:104px;top:675px"></div>
<svg style="left:119px;top:674px" width="16" height="14" viewBox="0 0 16 14" shape-rendering="crispEdges"><path d="M1 1H7V2H8V3H14V12H1Z" fill="#e6e67e"/><rect x="1" y="1" width="6" height="1" fill="#f8f8c8"/><rect x="1" y="2" width="1" height="10" fill="#f8f8c8"/><rect x="8" y="3" width="6" height="1" fill="#f8f8c8"/><path d="M0.5 12V1.5H1.5V0.5H6.5L8.5 2.5H13.5" fill="none" stroke="#76765a" stroke-width="1"/><path d="M14 3H15.5V13.5H1V12H14Z" fill="#000"/></svg>
<div class="t" style="left:141px;top:674px;color:#000;letter-spacing:-0.23px">Lee_Enfield</div>
<div class="hd" style="left:89px;top:697px;width:9px"></div>
<div class="box" style="left:83px;top:693px"><i></i></div>
<div class="cb" style="left:104px;top:692px"></div>
<svg style="left:119px;top:691px" width="16" height="14" viewBox="0 0 16 14" shape-rendering="crispEdges"><path d="M1 1H7V2H8V3H14V12H1Z" fill="#e6e67e"/><rect x="1" y="1" width="6" height="1" fill="#f8f8c8"/><rect x="1" y="2" width="1" height="10" fill="#f8f8c8"/><rect x="8" y="3" width="6" height="1" fill="#f8f8c8"/><path d="M0.5 12V1.5H1.5V0.5H6.5L8.5 2.5H13.5" fill="none" stroke="#76765a" stroke-width="1"/><path d="M14 3H15.5V13.5H1V12H14Z" fill="#000"/></svg>
<div class="t" style="left:141px;top:691px;color:#000;letter-spacing:-0.314px">Painters</div>
<div class="hd" style="left:107px;top:714px;width:9px"></div>
<div class="box" style="left:101px;top:710px"><i></i></div>
<div class="cb" style="left:122px;top:709px"></div>
<svg style="left:137px;top:708px" width="16" height="14" viewBox="0 0 16 14" shape-rendering="crispEdges"><path d="M1 1H7V2H8V3H14V12H1Z" fill="#e6e67e"/><rect x="1" y="1" width="6" height="1" fill="#f8f8c8"/><rect x="1" y="2" width="1" height="10" fill="#f8f8c8"/><rect x="8" y="3" width="6" height="1" fill="#f8f8c8"/><path d="M0.5 12V1.5H1.5V0.5H6.5L8.5 2.5H13.5" fill="none" stroke="#76765a" stroke-width="1"/><path d="M14 3H15.5V13.5H1V12H14Z" fill="#000"/></svg>
<div class="t" style="left:159px;top:708px;color:#000;letter-spacing:-0.156px">retro cars</div>
<div class="hd" style="left:125px;top:731px;width:9px;background-image:linear-gradient(90deg,#e8fbff 50%,transparent 50%)"></div>
<div class="cb" style="left:140px;top:726px;border:1px solid #cfeaff;border-radius:2px"></div>
<svg style="left:156px;top:726px" width="14" height="12" viewBox="0 0 16 14"><path d="M1 1H7V2H8V3H14V12H1Z" fill="#e6e67e"/><rect x="1" y="1" width="6" height="1" fill="#f8f8c8"/><rect x="1" y="2" width="1" height="10" fill="#f8f8c8"/><rect x="8" y="3" width="6" height="1" fill="#f8f8c8"/><path d="M0.5 12V1.5H1.5V0.5H6.5L8.5 2.5H13.5" fill="none" stroke="#76765a" stroke-width="1"/><path d="M14 3H15.5V13.5H1V12H14Z" fill="#000"/></svg>
<div class="t" style="left:177px;top:725px;color:#fff;letter-spacing:-0.206px">a lot of retro cars</div>
<div class="hd" style="left:107px;top:748px;width:9px"></div>
<div class="box" style="left:101px;top:744px"><i></i><b></b></div>
<div class="cb" style="left:122px;top:743px"></div>
<svg style="left:137px;top:742px" width="16" height="14" viewBox="0 0 16 14" shape-rendering="crispEdges"><path d="M1 1H7V2H8V3H14V12H1Z" fill="#e6e67e"/><rect x="1" y="1" width="6" height="1" fill="#f8f8c8"/><rect x="1" y="2" width="1" height="10" fill="#f8f8c8"/><rect x="8" y="3" width="6" height="1" fill="#f8f8c8"/><path d="M0.5 12V1.5H1.5V0.5H6.5L8.5 2.5H13.5" fill="none" stroke="#76765a" stroke-width="1"/><path d="M14 3H15.5V13.5H1V12H14Z" fill="#000"/></svg>
<div class="t" style="left:159px;top:742px;color:#000;letter-spacing:-0.141px">Russkie hudozhniki</div>
<div class="hd" style="left:107px;top:765px;width:9px"></div>
<div class="box" style="left:101px;top:761px"><i></i><b></b></div>
<div class="cb" style="left:122px;top:760px"></div>
<svg style="left:137px;top:759px" width="16" height="14" viewBox="0 0 16 14" shape-rendering="crispEdges"><path d="M1 1H7V2H8V3H14V12H1Z" fill="#e6e67e"/><rect x="1" y="1" width="6" height="1" fill="#f8f8c8"/><rect x="1" y="2" width="1" height="10" fill="#f8f8c8"/><rect x="8" y="3" width="6" height="1" fill="#f8f8c8"/><path d="M0.5 12V1.5H1.5V0.5H6.5L8.5 2.5H13.5" fill="none" stroke="#76765a" stroke-width="1"/><path d="M14 3H15.5V13.5H1V12H14Z" fill="#000"/></svg>
<div class="t" style="left:159px;top:759px;color:#000;letter-spacing:-0.15px">Space</div>
<div class="hd" style="left:89px;top:782px;width:9px"></div>
<div class="box" style="left:83px;top:778px"><i></i></div>
<div class="cb" style="left:104px;top:777px"></div>
<svg style="left:119px;top:776px" width="16" height="14" viewBox="0 0 16 14" shape-rendering="crispEdges"><path d="M1 1H7V2H8V3H14V12H1Z" fill="#e6e67e"/><rect x="1" y="1" width="6" height="1" fill="#f8f8c8"/><rect x="1" y="2" width="1" height="10" fill="#f8f8c8"/><rect x="8" y="3" width="6" height="1" fill="#f8f8c8"/><path d="M0.5 12V1.5H1.5V0.5H6.5L8.5 2.5H13.5" fill="none" stroke="#76765a" stroke-width="1"/><path d="M14 3H15.5V13.5H1V12H14Z" fill="#000"/></svg>
<div class="t" style="left:141px;top:776px;color:#000;letter-spacing:-0.156px">retro cars</div>
<div class="hd" style="left:107px;top:799px;width:9px"></div>
<div class="cb" style="left:122px;top:794px"></div>
<svg style="left:137px;top:793px" width="16" height="14" viewBox="0 0 16 14" shape-rendering="crispEdges"><path d="M1 1H7V2H8V3H14V12H1Z" fill="#e6e67e"/><rect x="1" y="1" width="6" height="1" fill="#f8f8c8"/><rect x="1" y="2" width="1" height="10" fill="#f8f8c8"/><rect x="8" y="3" width="6" height="1" fill="#f8f8c8"/><path d="M0.5 12V1.5H1.5V0.5H6.5L8.5 2.5H13.5" fill="none" stroke="#76765a" stroke-width="1"/><path d="M14 3H15.5V13.5H1V12H14Z" fill="#000"/></svg>
<div class="t" style="left:159px;top:793px;color:#000;letter-spacing:-0.206px">a lot of retro cars</div>
<div class="hd" style="left:89px;top:816px;width:9px"></div>
<div class="box" style="left:83px;top:812px"><i></i></div>
<div class="cb" style="left:104px;top:811px"></div>
<svg style="left:119px;top:810px" width="16" height="14" viewBox="0 0 16 14" shape-rendering="crispEdges"><path d="M1 1H7V2H8V3H14V12H1Z" fill="#e6e67e"/><rect x="1" y="1" width="6" height="1" fill="#f8f8c8"/><rect x="1" y="2" width="1" height="10" fill="#f8f8c8"/><rect x="8" y="3" width="6" height="1" fill="#f8f8c8"/><path d="M0.5 12V1.5H1.5V0.5H6.5L8.5 2.5H13.5" fill="none" stroke="#76765a" stroke-width="1"/><path d="M14 3H15.5V13.5H1V12H14Z" fill="#000"/></svg>
<div class="t" style="left:141px;top:810px;color:#000;letter-spacing:-0.237px">Something</div>
<div class="vd" style="left:88px;top:723px;height:15px;background-image:linear-gradient(#e8fbff 50%,transparent 50%)"></div>
<div class="vd" style="left:106px;top:723px;height:15px;background-image:linear-gradient(#e8fbff 50%,transparent 50%)"></div>
<div class="vd" style="left:124px;top:723px;height:9px;background-image:linear-gradient(#e8fbff 50%,transparent 50%)"></div>
<div class="ab" style="left:708px;top:116px;width:16px;height:16px;background:#e3e3e3;"></div>
<div class="ab" style="left:708px;top:132px;width:16px;height:1px;background:#ffffff;"></div>
<div class="ab" style="left:724px;top:116px;width:251px;height:17px;background:#f7f7f7;"></div>
<div class="ab" style="left:764px;top:116px;width:183px;height:16px;background:#e3e3e3;"></div>
<div class="ab" style="left:734px;top:121px;width:8px;height:10px;background:#fdfdfd;"></div>
<div class="ab" style="left:734px;top:120px;width:8px;height:1px;background:#a0a0a0;"></div>
<div class="ab" style="left:732px;top:124px;width:1px;height:6px;background:#a0a0a0;"></div>
<svg style="left:726px;top:116px" width="8" height="8" viewBox="0 0 8 8"><path d="M2.6 0.6H5.4L7.4 2.6V5.4L5.4 7.4H2.6L0.6 5.4V2.6Z" fill="#30d030" stroke="#000" stroke-width="1.2"/></svg>
<svg style="left:747px;top:117px" width="16" height="16" viewBox="0 0 16 16" shape-rendering="crispEdges"><rect x="2" y="0" width="12" height="16" fill="#e4f8fc"/><rect x="2" y="0" width="10" height="1" fill="#9aa8aa"/><rect x="2" y="15" width="12" height="1" fill="#8a9a9c"/><rect x="2" y="1" width="1" height="14" fill="#c0d0d2"/><rect x="0" y="0" width="2" height="16" fill="#000"/><rect x="14" y="0" width="2" height="16" fill="#000"/><path d="M12 0H14V2H13V1H12Z" fill="#000"/><rect x="4" y="4" width="8" height="8" fill="#13649a"/><rect x="5" y="5" width="6" height="6" fill="#2a8fd2"/><path d="M5 5H11V8H10V7H9V8H8V7H7V6H6V7H5Z" fill="#b4f2ff"/><path d="M9 8H10V9H11V10H10V9H9Z" fill="#90e0f8"/></svg>
<div class="t" style="left:769px;top:118px;letter-spacing:-0.19px">Image_0001.jpg</div>
<div class="ab" style="left:708px;top:133px;width:16px;height:16px;background:#e3e3e3;"></div>
<div class="ab" style="left:708px;top:149px;width:16px;height:1px;background:#ffffff;"></div>
<div class="ab" style="left:724px;top:133px;width:251px;height:17px;background:#f7f7f7;"></div>
<div class="ab" style="left:734px;top:138px;width:8px;height:10px;background:#fdfdfd;"></div>
<div class="ab" style="left:734px;top:137px;width:8px;height:1px;background:#a0a0a0;"></div>
<div class="ab" style="left:732px;top:141px;width:1px;height:6px;background:#a0a0a0;"></div>
<svg style="left:726px;top:133px" width="8" height="8" viewBox="0 0 8 8"><path d="M2.6 0.6H5.4L7.4 2.6V5.4L5.4 7.4H2.6L0.6 5.4V2.6Z" fill="#30d030" stroke="#000" stroke-width="1.2"/></svg>
<svg style="left:747px;top:134px" width="16" height="16" viewBox="0 0 16 16" shape-rendering="crispEdges"><rect x="2" y="0" width="12" height="16" fill="#e4f8fc"/><rect x="2" y="0" width="10" height="1" fill="#9aa8aa"/><rect x="2" y="15" width="12" height="1" fill="#8a9a9c"/><rect x="2" y="1" width="1" height="14" fill="#c0d0d2"/><rect x="0" y="0" width="2" height="16" fill="#000"/><rect x="14" y="0" width="2" height="16" fill="#000"/><path d="M12 0H14V2H13V1H12Z" fill="#000"/><rect x="4" y="4" width="8" height="8" fill="#13649a"/><rect x="5" y="5" width="6" height="6" fill="#2a8fd2"/><path d="M5 5H11V8H10V7H9V8H8V7H7V6H6V7H5Z" fill="#b4f2ff"/><path d="M9 8H10V9H11V10H10V9H9Z" fill="#90e0f8"/></svg>
<div class="t" style="left:769px;top:135px;letter-spacing:-0.19px">Image_0002.jpg</div>
<div class="ab" style="left:708px;top:150px;width:16px;height:16px;background:#e3e3e3;"></div>
<div class="ab" style="left:708px;top:166px;width:16px;height:1px;background:#ffffff;"></div>
<div class="ab" style="left:724px;top:150px;width:251px;height:17px;background:#f7f7f7;"></div>
<div class="ab" style="left:734px;top:155px;width:8px;height:10px;background:#fdfdfd;"></div>
<div class="ab" style="left:734px;top:154px;width:8px;height:1px;background:#a0a0a0;"></div>
<div class="ab" style="left:732px;top:158px;width:1px;height:6px;background:#a0a0a0;"></div>
<svg style="left:726px;top:150px" width="8" height="8" viewBox="0 0 8 8"><path d="M2.6 0.6H5.4L7.4 2.6V5.4L5.4 7.4H2.6L0.6 5.4V2.6Z" fill="#30d030" stroke="#000" stroke-width="1.2"/></svg>
<svg style="left:747px;top:151px" width="16" height="16" viewBox="0 0 16 16" shape-rendering="crispEdges"><rect x="2" y="0" width="12" height="16" fill="#e4f8fc"/><rect x="2" y="0" width="10" height="1" fill="#9aa8aa"/><rect x="2" y="15" width="12" height="1" fill="#8a9a9c"/><rect x="2" y="1" width="1" height="14" fill="#c0d0d2"/><rect x="0" y="0" width="2" height="16" fill="#000"/><rect x="14" y="0" width="2" height="16" fill="#000"/><path d="M12 0H14V2H13V1H12Z" fill="#000"/><rect x="4" y="4" width="8" height="8" fill="#13649a"/><rect x="5" y="5" width="6" height="6" fill="#2a8fd2"/><path d="M5 5H11V8H10V7H9V8H8V7H7V6H6V7H5Z" fill="#b4f2ff"/><path d="M9 8H10V9H11V10H10V9H9Z" fill="#90e0f8"/></svg>
<div class="t" style="left:769px;top:152px;letter-spacing:-0.19px">Image_0003.jpg</div>
<div class="ab" style="left:708px;top:167px;width:16px;height:16px;background:#e3e3e3;"></div>
<div class="ab" style="left:708px;top:183px;width:16px;height:1px;background:#ffffff;"></div>
<div class="ab" style="left:724px;top:167px;width:251px;height:17px;background:#f7f7f7;"></div>
<div class="ab" style="left:734px;top:172px;width:8px;height:10px;background:#fdfdfd;"></div>
<div class="ab" style="left:734px;top:171px;width:8px;height:1px;background:#a0a0a0;"></div>
<div class="ab" style="left:732px;top:175px;width:1px;height:6px;background:#a0a0a0;"></div>
<svg style="left:726px;top:167px" width="8" height="8" viewBox="0 0 8 8"><path d="M2.6 0.6H5.4L7.4 2.6V5.4L5.4 7.4H2.6L0.6 5.4V2.6Z" fill="#30d030" stroke="#000" stroke-width="1.2"/></svg>
<svg style="left:747px;top:168px" width="16" height="16" viewBox="0 0 16 16" shape-rendering="crispEdges"><rect x="2" y="0" width="12" height="16" fill="#e4f8fc"/><rect x="2" y="0" width="10" height="1" fill="#9aa8aa"/><rect x="2" y="15" width="12" height="1" fill="#8a9a9c"/><rect x="2" y="1" width="1" height="14" fill="#c0d0d2"/><rect x="0" y="0" width="2" height="16" fill="#000"/><rect x="14" y="0" width="2" height="16" fill="#000"/><path d="M12 0H14V2H13V1H12Z" fill="#000"/><rect x="4" y="4" width="8" height="8" fill="#13649a"/><rect x="5" y="5" width="6" height="6" fill="#2a8fd2"/><path d="M5 5H11V8H10V7H9V8H8V7H7V6H6V7H5Z" fill="#b4f2ff"/><path d="M9 8H10V9H11V10H10V9H9Z" fill="#90e0f8"/></svg>
<div class="t" style="left:769px;top:169px;letter-spacing:-0.19px">Image_0004.jpg</div>
<div class="ab" style="left:708px;top:184px;width:16px;height:16px;background:#e3e3e3;"></div>
<div class="ab" style="left:708px;top:200px;width:16px;height:1px;background:#ffffff;"></div>
<div class="ab" style="left:724px;top:184px;width:251px;height:17px;background:#f7f7f7;"></div>
<div class="ab" style="left:734px;top:189px;width:8px;height:10px;background:#fdfdfd;"></div>
<div class="ab" style="left:734px;top:188px;width:8px;height:1px;background:#a0a0a0;"></div>
<div class="ab" style="left:732px;top:192px;width:1px;height:6px;background:#a0a0a0;"></div>
<svg style="left:726px;top:184px" width="8" height="8" viewBox="0 0 8 8"><path d="M2.6 0.6H5.4L7.4 2.6V5.4L5.4 7.4H2.6L0.6 5.4V2.6Z" fill="#30d030" stroke="#000" stroke-width="1.2"/></svg>
<svg style="left:747px;top:185px" width="16" height="16" viewBox="0 0 16 16" shape-rendering="crispEdges"><rect x="2" y="0" width="12" height="16" fill="#e4f8fc"/><rect x="2" y="0" width="10" height="1" fill="#9aa8aa"/><rect x="2" y="15" width="12" height="1" fill="#8a9a9c"/><rect x="2" y="1" width="1" height="14" fill="#c0d0d2"/><rect x="0" y="0" width="2" height="16" fill="#000"/><rect x="14" y="0" width="2" height="16" fill="#000"/><path d="M12 0H14V2H13V1H12Z" fill="#000"/><rect x="4" y="4" width="8" height="8" fill="#13649a"/><rect x="5" y="5" width="6" height="6" fill="#2a8fd2"/><path d="M5 5H11V8H10V7H9V8H8V7H7V6H6V7H5Z" fill="#b4f2ff"/><path d="M9 8H10V9H11V10H10V9H9Z" fill="#90e0f8"/></svg>
<div class="t" style="left:769px;top:186px;letter-spacing:-0.19px">Image_0005.jpg</div>
<div class="ab" style="left:708px;top:201px;width:16px;height:16px;background:#e3e3e3;"></div>
<div class="ab" style="left:708px;top:217px;width:16px;height:1px;background:#ffffff;"></div>
<div class="ab" style="left:724px;top:201px;width:251px;height:17px;background:#f7f7f7;"></div>
<div class="ab" style="left:734px;top:206px;width:8px;height:10px;background:#fdfdfd;"></div>
<div class="ab" style="left:734px;top:205px;width:8px;height:1px;background:#a0a0a0;"></div>
<div class="ab" style="left:732px;top:209px;width:1px;height:6px;background:#a0a0a0;"></div>
<svg style="left:726px;top:201px" width="8" height="8" viewBox="0 0 8 8"><path d="M2.6 0.6H5.4L7.4 2.6V5.4L5.4 7.4H2.6L0.6 5.4V2.6Z" fill="#30d030" stroke="#000" stroke-width="1.2"/></svg>
<svg style="left:747px;top:202px" width="16" height="16" viewBox="0 0 16 16" shape-rendering="crispEdges"><rect x="2" y="0" width="12" height="16" fill="#e4f8fc"/><rect x="2" y="0" width="10" height="1" fill="#9aa8aa"/><rect x="2" y="15" width="12" height="1" fill="#8a9a9c"/><rect x="2" y="1" width="1" height="14" fill="#c0d0d2"/><rect x="0" y="0" width="2" height="16" fill="#000"/><rect x="14" y="0" width="2" height="16" fill="#000"/><path d="M12 0H14V2H13V1H12Z" fill="#000"/><rect x="4" y="4" width="8" height="8" fill="#13649a"/><rect x="5" y="5" width="6" height="6" fill="#2a8fd2"/><path d="M5 5H11V8H10V7H9V8H8V7H7V6H6V7H5Z" fill="#b4f2ff"/><path d="M9 8H10V9H11V10H10V9H9Z" fill="#90e0f8"/></svg>
<div class="t" style="left:769px;top:203px;letter-spacing:-0.19px">Image_0006.jpg</div>
<div class="ab" style="left:708px;top:218px;width:16px;height:16px;background:#e3e3e3;"></div>
<div class="ab" style="left:708px;top:234px;width:16px;height:1px;background:#ffffff;"></div>
<div class="ab" style="left:724px;top:218px;width:251px;height:17px;background:#f7f7f7;"></div>
<div class="ab" style="left:734px;top:223px;width:8px;height:10px;background:#fdfdfd;"></div>
<div class="ab" style="left:734px;top:222px;width:8px;height:1px;background:#a0a0a0;"></div>
<div class="ab" style="left:732px;top:226px;width:1px;height:6px;background:#a0a0a0;"></div>
<svg style="left:726px;top:218px" width="8" height="8" viewBox="0 0 8 8"><path d="M2.6 0.6H5.4L7.4 2.6V5.4L5.4 7.4H2.6L0.6 5.4V2.6Z" fill="#30d030" stroke="#000" stroke-width="1.2"/></svg>
<svg style="left:747px;top:219px" width="16" height="16" viewBox="0 0 16 16" shape-rendering="crispEdges"><rect x="2" y="0" width="12" height="16" fill="#e4f8fc"/><rect x="2" y="0" width="10" height="1" fill="#9aa8aa"/><rect x="2" y="15" width="12" height="1" fill="#8a9a9c"/><rect x="2" y="1" width="1" height="14" fill="#c0d0d2"/><rect x="0" y="0" width="2" height="16" fill="#000"/><rect x="14" y="0" width="2" height="16" fill="#000"/><path d="M12 0H14V2H13V1H12Z" fill="#000"/><rect x="4" y="4" width="8" height="8" fill="#13649a"/><rect x="5" y="5" width="6" height="6" fill="#2a8fd2"/><path d="M5 5H11V8H10V7H9V8H8V7H7V6H6V7H5Z" fill="#b4f2ff"/><path d="M9 8H10V9H11V10H10V9H9Z" fill="#90e0f8"/></svg>
<div class="t" style="left:769px;top:220px;letter-spacing:-0.19px">Image_0007.jpg</div>
<div class="ab" style="left:708px;top:235px;width:16px;height:16px;background:#e3e3e3;"></div>
<div class="ab" style="left:708px;top:251px;width:16px;height:1px;background:#ffffff;"></div>
<div class="ab" style="left:724px;top:235px;width:251px;height:17px;background:#f7f7f7;"></div>
<div class="ab" style="left:734px;top:240px;width:8px;height:10px;background:#fdfdfd;"></div>
<div class="ab" style="left:734px;top:239px;width:8px;height:1px;background:#a0a0a0;"></div>
<div class="ab" style="left:732px;top:243px;width:1px;height:6px;background:#a0a0a0;"></div>
<svg style="left:726px;top:235px" width="8" height="8" viewBox="0 0 8 8"><path d="M2.6 0.6H5.4L7.4 2.6V5.4L5.4 7.4H2.6L0.6 5.4V2.6Z" fill="#30d030" stroke="#000" stroke-width="1.2"/></svg>
<svg style="left:747px;top:236px" width="16" height="16" viewBox="0 0 16 16" shape-rendering="crispEdges"><rect x="2" y="0" width="12" height="16" fill="#e4f8fc"/><rect x="2" y="0" width="10" height="1" fill="#9aa8aa"/><rect x="2" y="15" width="12" height="1" fill="#8a9a9c"/><rect x="2" y="1" width="1" height="14" fill="#c0d0d2"/><rect x="0" y="0" width="2" height="16" fill="#000"/><rect x="14" y="0" width="2" height="16" fill="#000"/><path d="M12 0H14V2H13V1H12Z" fill="#000"/><rect x="4" y="4" width="8" height="8" fill="#13649a"/><rect x="5" y="5" width="6" height="6" fill="#2a8fd2"/><path d="M5 5H11V8H10V7H9V8H8V7H7V6H6V7H5Z" fill="#b4f2ff"/><path d="M9 8H10V9H11V10H10V9H9Z" fill="#90e0f8"/></svg>
<div class="t" style="left:769px;top:237px;letter-spacing:-0.19px">Image_0008.jpg</div>
<div class="ab" style="left:708px;top:252px;width:16px;height:16px;background:#e3e3e3;"></div>
<div class="ab" style="left:708px;top:268px;width:16px;height:1px;background:#ffffff;"></div>
<div class="ab" style="left:724px;top:252px;width:251px;height:17px;background:#f7f7f7;"></div>
<div class="ab" style="left:734px;top:257px;width:8px;height:10px;background:#fdfdfd;"></div>
<div class="ab" style="left:734px;top:256px;width:8px;height:1px;background:#a0a0a0;"></div>
<div class="ab" style="left:732px;top:260px;width:1px;height:6px;background:#a0a0a0;"></div>
<svg style="left:726px;top:252px" width="8" height="8" viewBox="0 0 8 8"><path d="M2.6 0.6H5.4L7.4 2.6V5.4L5.4 7.4H2.6L0.6 5.4V2.6Z" fill="#30d030" stroke="#000" stroke-width="1.2"/></svg>
<svg style="left:747px;top:253px" width="16" height="16" viewBox="0 0 16 16" shape-rendering="crispEdges"><rect x="2" y="0" width="12" height="16" fill="#e4f8fc"/><rect x="2" y="0" width="10" height="1" fill="#9aa8aa"/><rect x="2" y="15" width="12" height="1" fill="#8a9a9c"/><rect x="2" y="1" width="1" height="14" fill="#c0d0d2"/><rect x="0" y="0" width="2" height="16" fill="#000"/><rect x="14" y="0" width="2" height="16" fill="#000"/><path d="M12 0H14V2H13V1H12Z" fill="#000"/><rect x="4" y="4" width="8" height="8" fill="#13649a"/><rect x="5" y="5" width="6" height="6" fill="#2a8fd2"/><path d="M5 5H11V8H10V7H9V8H8V7H7V6H6V7H5Z" fill="#b4f2ff"/><path d="M9 8H10V9H11V10H10V9H9Z" fill="#90e0f8"/></svg>
<div class="t" style="left:769px;top:254px;letter-spacing:-0.19px">Image_0009.jpg</div>
<div class="ab" style="left:708px;top:269px;width:16px;height:16px;background:#e3e3e3;"></div>
<div class="ab" style="left:708px;top:285px;width:16px;height:1px;background:#ffffff;"></div>
<div class="ab" style="left:724px;top:269px;width:251px;height:17px;background:#f7f7f7;"></div>
<div class="ab" style="left:734px;top:274px;width:8px;height:10px;background:#fdfdfd;"></div>
<div class="ab" style="left:734px;top:273px;width:8px;height:1px;background:#a0a0a0;"></div>
<div class="ab" style="left:732px;top:277px;width:1px;height:6px;background:#a0a0a0;"></div>
<svg style="left:726px;top:269px" width="8" height="8" viewBox="0 0 8 8"><path d="M2.6 0.6H5.4L7.4 2.6V5.4L5.4 7.4H2.6L0.6 5.4V2.6Z" fill="#30d030" stroke="#000" stroke-width="1.2"/></svg>
<svg style="left:747px;top:270px" width="16" height="16" viewBox="0 0 16 16" shape-rendering="crispEdges"><rect x="2" y="0" width="12" height="16" fill="#e4f8fc"/><rect x="2" y="0" width="10" height="1" fill="#9aa8aa"/><rect x="2" y="15" width="12" height="1" fill="#8a9a9c"/><rect x="2" y="1" width="1" height="14" fill="#c0d0d2"/><rect x="0" y="0" width="2" height="16" fill="#000"/><rect x="14" y="0" width="2" height="16" fill="#000"/><path d="M12 0H14V2H13V1H12Z" fill="#000"/><rect x="4" y="4" width="8" height="8" fill="#13649a"/><rect x="5" y="5" width="6" height="6" fill="#2a8fd2"/><path d="M5 5H11V8H10V7H9V8H8V7H7V6H6V7H5Z" fill="#b4f2ff"/><path d="M9 8H10V9H11V10H10V9H9Z" fill="#90e0f8"/></svg>
<div class="t" style="left:769px;top:271px;letter-spacing:-0.19px">Image_0010.jpg</div>
<div class="ab" style="left:708px;top:286px;width:16px;height:16px;background:#e3e3e3;"></div>
<div class="ab" style="left:708px;top:302px;width:16px;height:1px;background:#ffffff;"></div>
<div class="ab" style="left:724px;top:286px;width:251px;height:17px;background:#f7f7f7;"></div>
<div class="ab" style="left:734px;top:291px;width:8px;height:10px;background:#fdfdfd;"></div>
<div class="ab" style="left:734px;top:290px;width:8px;height:1px;background:#a0a0a0;"></div>
<div class="ab" style="left:732px;top:294px;width:1px;height:6px;background:#a0a0a0;"></div>
<svg style="left:726px;top:286px" width="8" height="8" viewBox="0 0 8 8"><path d="M2.6 0.6H5.4L7.4 2.6V5.4L5.4 7.4H2.6L0.6 5.4V2.6Z" fill="#30d030" stroke="#000" stroke-width="1.2"/></svg>
<svg style="left:747px;top:287px" width="16" height="16" viewBox="0 0 16 16" shape-rendering="crispEdges"><rect x="2" y="0" width="12" height="16" fill="#e4f8fc"/><rect x="2" y="0" width="10" height="1" fill="#9aa8aa"/><rect x="2" y="15" width="12" height="1" fill="#8a9a9c"/><rect x="2" y="1" width="1" height="14" fill="#c0d0d2"/><rect x="0" y="0" width="2" height="16" fill="#000"/><rect x="14" y="0" width="2" height="16" fill="#000"/><path d="M12 0H14V2H13V1H12Z" fill="#000"/><rect x="4" y="4" width="8" height="8" fill="#13649a"/><rect x="5" y="5" width="6" height="6" fill="#2a8fd2"/><path d="M5 5H11V8H10V7H9V8H8V7H7V6H6V7H5Z" fill="#b4f2ff"/><path d="M9 8H10V9H11V10H10V9H9Z" fill="#90e0f8"/></svg>
<div class="t" style="left:769px;top:288px;letter-spacing:-0.19px">Image_0011.jpg</div>
<div class="ab" style="left:708px;top:303px;width:16px;height:16px;background:#e3e3e3;"></div>
<div class="ab" style="left:708px;top:319px;width:16px;height:1px;background:#ffffff;"></div>
<div class="ab" style="left:724px;top:303px;width:251px;height:17px;background:#f7f7f7;"></div>
<div class="ab" style="left:734px;top:308px;width:8px;height:10px;background:#fdfdfd;"></div>
<div class="ab" style="left:734px;top:307px;width:8px;height:1px;background:#a0a0a0;"></div>
<div class="ab" style="left:732px;top:311px;width:1px;height:6px;background:#a0a0a0;"></div>
<svg style="left:726px;top:303px" width="8" height="8" viewBox="0 0 8 8"><path d="M2.6 0.6H5.4L7.4 2.6V5.4L5.4 7.4H2.6L0.6 5.4V2.6Z" fill="#30d030" stroke="#000" stroke-width="1.2"/></svg>
<svg style="left:747px;top:304px" width="16" height="16" viewBox="0 0 16 16" shape-rendering="crispEdges"><rect x="2" y="0" width="12" height="16" fill="#e4f8fc"/><rect x="2" y="0" width="10" height="1" fill="#9aa8aa"/><rect x="2" y="15" width="12" height="1" fill="#8a9a9c"/><rect x="2" y="1" width="1" height="14" fill="#c0d0d2"/><rect x="0" y="0" width="2" height="16" fill="#000"/><rect x="14" y="0" width="2" height="16" fill="#000"/><path d="M12 0H14V2H13V1H12Z" fill="#000"/><rect x="4" y="4" width="8" height="8" fill="#13649a"/><rect x="5" y="5" width="6" height="6" fill="#2a8fd2"/><path d="M5 5H11V8H10V7H9V8H8V7H7V6H6V7H5Z" fill="#b4f2ff"/><path d="M9 8H10V9H11V10H10V9H9Z" fill="#90e0f8"/></svg>
<div class="t" style="left:769px;top:305px;letter-spacing:-0.19px">Image_0012.jpg</div>
<div class="ab" style="left:708px;top:320px;width:16px;height:16px;background:#e3e3e3;"></div>
<div class="ab" style="left:708px;top:336px;width:16px;height:1px;background:#ffffff;"></div>
<div class="ab" style="left:724px;top:320px;width:251px;height:17px;background:#f7f7f7;"></div>
<div class="ab" style="left:734px;top:325px;width:8px;height:10px;background:#fdfdfd;"></div>
<div class="ab" style="left:734px;top:324px;width:8px;height:1px;background:#a0a0a0;"></div>
<div class="ab" style="left:732px;top:328px;width:1px;height:6px;background:#a0a0a0;"></div>
<svg style="left:726px;top:320px" width="8" height="8" viewBox="0 0 8 8"><path d="M2.6 0.6H5.4L7.4 2.6V5.4L5.4 7.4H2.6L0.6 5.4V2.6Z" fill="#30d030" stroke="#000" stroke-width="1.2"/></svg>
<svg style="left:747px;top:321px" width="16" height="16" viewBox="0 0 16 16" shape-rendering="crispEdges"><rect x="2" y="0" width="12" height="16" fill="#e4f8fc"/><rect x="2" y="0" width="10" height="1" fill="#9aa8aa"/><rect x="2" y="15" width="12" height="1" fill="#8a9a9c"/><rect x="2" y="1" width="1" height="14" fill="#c0d0d2"/><rect x="0" y="0" width="2" height="16" fill="#000"/><rect x="14" y="0" width="2" height="16" fill="#000"/><path d="M12 0H14V2H13V1H12Z" fill="#000"/><rect x="4" y="4" width="8" height="8" fill="#13649a"/><rect x="5" y="5" width="6" height="6" fill="#2a8fd2"/><path d="M5 5H11V8H10V7H9V8H8V7H7V6H6V7H5Z" fill="#b4f2ff"/><path d="M9 8H10V9H11V10H10V9H9Z" fill="#90e0f8"/></svg>
<div class="t" style="left:769px;top:322px;letter-spacing:-0.19px">Image_0013.jpg</div>
<div class="ab" style="left:708px;top:337px;width:16px;height:16px;background:#e3e3e3;"></div>
<div class="ab" style="left:708px;top:353px;width:16px;height:1px;background:#ffffff;"></div>
<div class="ab" style="left:724px;top:337px;width:251px;height:17px;background:#f7f7f7;"></div>
<div class="ab" style="left:734px;top:342px;width:8px;height:10px;background:#fdfdfd;"></div>
<div class="ab" style="left:734px;top:341px;width:8px;height:1px;background:#a0a0a0;"></div>
<div class="ab" style="left:732px;top:345px;width:1px;height:6px;background:#a0a0a0;"></div>
<svg style="left:726px;top:337px" width="8" height="8" viewBox="0 0 8 8"><path d="M2.6 0.6H5.4L7.4 2.6V5.4L5.4 7.4H2.6L0.6 5.4V2.6Z" fill="#30d030" stroke="#000" stroke-width="1.2"/></svg>
<svg style="left:747px;top:338px" width="16" height="16" viewBox="0 0 16 16" shape-rendering="crispEdges"><rect x="2" y="0" width="12" height="16" fill="#e4f8fc"/><rect x="2" y="0" width="10" height="1" fill="#9aa8aa"/><rect x="2" y="15" width="12" height="1" fill="#8a9a9c"/><rect x="2" y="1" width="1" height="14" fill="#c0d0d2"/><rect x="0" y="0" width="2" height="16" fill="#000"/><rect x="14" y="0" width="2" height="16" fill="#000"/><path d="M12 0H14V2H13V1H12Z" fill="#000"/><rect x="4" y="4" width="8" height="8" fill="#13649a"/><rect x="5" y="5" width="6" height="6" fill="#2a8fd2"/><path d="M5 5H11V8H10V7H9V8H8V7H7V6H6V7H5Z" fill="#b4f2ff"/><path d="M9 8H10V9H11V10H10V9H9Z" fill="#90e0f8"/></svg>
<div class="t" style="left:769px;top:339px;letter-spacing:-0.19px">Image_0014.jpg</div>
<div class="ab" style="left:708px;top:354px;width:16px;height:16px;background:#e3e3e3;"></div>
<div class="ab" style="left:708px;top:370px;width:16px;height:1px;background:#ffffff;"></div>
<div class="ab" style="left:724px;top:354px;width:251px;height:17px;background:#f7f7f7;"></div>
<div class="ab" style="left:734px;top:359px;width:8px;height:10px;background:#fdfdfd;"></div>
<div class="ab" style="left:734px;top:358px;width:8px;height:1px;background:#a0a0a0;"></div>
<div class="ab" style="left:732px;top:362px;width:1px;height:6px;background:#a0a0a0;"></div>
<svg style="left:726px;top:354px" width="8" height="8" viewBox="0 0 8 8"><path d="M2.6 0.6H5.4L7.4 2.6V5.4L5.4 7.4H2.6L0.6 5.4V2.6Z" fill="#30d030" stroke="#000" stroke-width="1.2"/></svg>
<svg style="left:747px;top:355px" width="16" height="16" viewBox="0 0 16 16" shape-rendering="crispEdges"><rect x="2" y="0" width="12" height="16" fill="#e4f8fc"/><rect x="2" y="0" width="10" height="1" fill="#9aa8aa"/><rect x="2" y="15" width="12" height="1" fill="#8a9a9c"/><rect x="2" y="1" width="1" height="14" fill="#c0d0d2"/><rect x="0" y="0" width="2" height="16" fill="#000"/><rect x="14" y="0" width="2" height="16" fill="#000"/><path d="M12 0H14V2H13V1H12Z" fill="#000"/><rect x="4" y="4" width="8" height="8" fill="#13649a"/><rect x="5" y="5" width="6" height="6" fill="#2a8fd2"/><path d="M5 5H11V8H10V7H9V8H8V7H7V6H6V7H5Z" fill="#b4f2ff"/><path d="M9 8H10V9H11V10H10V9H9Z" fill="#90e0f8"/></svg>
<div class="t" style="left:769px;top:356px;letter-spacing:-0.19px">Image_0015.jpg</div>
<div class="ab" style="left:708px;top:371px;width:16px;height:16px;background:#e3e3e3;"></div>
<div class="ab" style="left:708px;top:387px;width:16px;height:1px;background:#ffffff;"></div>
<div class="ab" style="left:724px;top:371px;width:251px;height:17px;background:#f7f7f7;"></div>
<div class="ab" style="left:734px;top:376px;width:8px;height:10px;background:#fdfdfd;"></div>
<div class="ab" style="left:734px;top:375px;width:8px;height:1px;background:#a0a0a0;"></div>
<div class="ab" style="left:732px;top:379px;width:1px;height:6px;background:#a0a0a0;"></div>
<svg style="left:726px;top:371px" width="8" height="8" viewBox="0 0 8 8"><path d="M2.6 0.6H5.4L7.4 2.6V5.4L5.4 7.4H2.6L0.6 5.4V2.6Z" fill="#30d030" stroke="#000" stroke-width="1.2"/></svg>
<svg style="left:747px;top:372px" width="16" height="16" viewBox="0 0 16 16" shape-rendering="crispEdges"><rect x="2" y="0" width="12" height="16" fill="#e4f8fc"/><rect x="2" y="0" width="10" height="1" fill="#9aa8aa"/><rect x="2" y="15" width="12" height="1" fill="#8a9a9c"/><rect x="2" y="1" width="1" height="14" fill="#c0d0d2"/><rect x="0" y="0" width="2" height="16" fill="#000"/><rect x="14" y="0" width="2" height="16" fill="#000"/><path d="M12 0H14V2H13V1H12Z" fill="#000"/><rect x="4" y="4" width="8" height="8" fill="#13649a"/><rect x="5" y="5" width="6" height="6" fill="#2a8fd2"/><path d="M5 5H11V8H10V7H9V8H8V7H7V6H6V7H5Z" fill="#b4f2ff"/><path d="M9 8H10V9H11V10H10V9H9Z" fill="#90e0f8"/></svg>
<div class="t" style="left:769px;top:373px;letter-spacing:-0.19px">Image_0016.jpg</div>
<div class="ab" style="left:708px;top:388px;width:16px;height:16px;background:#e3e3e3;"></div>
<div class="ab" style="left:708px;top:404px;width:16px;height:1px;background:#ffffff;"></div>
<div class="ab" style="left:724px;top:388px;width:251px;height:17px;background:#f7f7f7;"></div>
<div class="ab" style="left:734px;top:393px;width:8px;height:10px;background:#fdfdfd;"></div>
<div class="ab" style="left:734px;top:392px;width:8px;height:1px;background:#a0a0a0;"></div>
<div class="ab" style="left:732px;top:396px;width:1px;height:6px;background:#a0a0a0;"></div>
<svg style="left:726px;top:388px" width="8" height="8" viewBox="0 0 8 8"><path d="M2.6 0.6H5.4L7.4 2.6V5.4L5.4 7.4H2.6L0.6 5.4V2.6Z" fill="#30d030" stroke="#000" stroke-width="1.2"/></svg>
<svg style="left:747px;top:389px" width="16" height="16" viewBox="0 0 16 16" shape-rendering="crispEdges"><rect x="2" y="0" width="12" height="16" fill="#e4f8fc"/><rect x="2" y="0" width="10" height="1" fill="#9aa8aa"/><rect x="2" y="15" width="12" height="1" fill="#8a9a9c"/><rect x="2" y="1" width="1" height="14" fill="#c0d0d2"/><rect x="0" y="0" width="2" height="16" fill="#000"/><rect x="14" y="0" width="2" height="16" fill="#000"/><path d="M12 0H14V2H13V1H12Z" fill="#000"/><rect x="4" y="4" width="8" height="8" fill="#13649a"/><rect x="5" y="5" width="6" height="6" fill="#2a8fd2"/><path d="M5 5H11V8H10V7H9V8H8V7H7V6H6V7H5Z" fill="#b4f2ff"/><path d="M9 8H10V9H11V10H10V9H9Z" fill="#90e0f8"/></svg>
<div class="t" style="left:769px;top:390px;letter-spacing:-0.19px">Image_0017.jpg</div>
<div class="ab" style="left:708px;top:405px;width:16px;height:16px;background:#e3e3e3;"></div>
<div class="ab" style="left:708px;top:421px;width:16px;height:1px;background:#ffffff;"></div>
<div class="ab" style="left:724px;top:405px;width:251px;height:17px;background:#f7f7f7;"></div>
<div class="ab" style="left:734px;top:410px;width:8px;height:10px;background:#fdfdfd;"></div>
<div class="ab" style="left:734px;top:409px;width:8px;height:1px;background:#a0a0a0;"></div>
<div class="ab" style="left:732px;top:413px;width:1px;height:6px;background:#a0a0a0;"></div>
<svg style="left:726px;top:405px" width="8" height="8" viewBox="0 0 8 8"><path d="M2.6 0.6H5.4L7.4 2.6V5.4L5.4 7.4H2.6L0.6 5.4V2.6Z" fill="#30d030" stroke="#000" stroke-width="1.2"/></svg>
<svg style="left:747px;top:406px" width="16" height="16" viewBox="0 0 16 16" shape-rendering="crispEdges"><rect x="2" y="0" width="12" height="16" fill="#e4f8fc"/><rect x="2" y="0" width="10" height="1" fill="#9aa8aa"/><rect x="2" y="15" width="12" height="1" fill="#8a9a9c"/><rect x="2" y="1" width="1" height="14" fill="#c0d0d2"/><rect x="0" y="0" width="2" height="16" fill="#000"/><rect x="14" y="0" width="2" height="16" fill="#000"/><path d="M12 0H14V2H13V1H12Z" fill="#000"/><rect x="4" y="4" width="8" height="8" fill="#13649a"/><rect x="5" y="5" width="6" height="6" fill="#2a8fd2"/><path d="M5 5H11V8H10V7H9V8H8V7H7V6H6V7H5Z" fill="#b4f2ff"/><path d="M9 8H10V9H11V10H10V9H9Z" fill="#90e0f8"/></svg>
<div class="t" style="left:769px;top:407px;letter-spacing:-0.19px">Image_0018.jpg</div>
<div class="ab" style="left:708px;top:422px;width:16px;height:16px;background:#e3e3e3;"></div>
<div class="ab" style="left:708px;top:438px;width:16px;height:1px;background:#ffffff;"></div>
<div class="ab" style="left:724px;top:422px;width:251px;height:17px;background:#f7f7f7;"></div>
<div class="ab" style="left:734px;top:427px;width:8px;height:10px;background:#fdfdfd;"></div>
<div class="ab" style="left:734px;top:426px;width:8px;height:1px;background:#a0a0a0;"></div>
<div class="ab" style="left:732px;top:430px;width:1px;height:6px;background:#a0a0a0;"></div>
<svg style="left:726px;top:422px" width="8" height="8" viewBox="0 0 8 8"><path d="M2.6 0.6H5.4L7.4 2.6V5.4L5.4 7.4H2.6L0.6 5.4V2.6Z" fill="#30d030" stroke="#000" stroke-width="1.2"/></svg>
<svg style="left:747px;top:423px" width="16" height="16" viewBox="0 0 16 16" shape-rendering="crispEdges"><rect x="2" y="0" width="12" height="16" fill="#e4f8fc"/><rect x="2" y="0" width="10" height="1" fill="#9aa8aa"/><rect x="2" y="15" width="12" height="1" fill="#8a9a9c"/><rect x="2" y="1" width="1" height="14" fill="#c0d0d2"/><rect x="0" y="0" width="2" height="16" fill="#000"/><rect x="14" y="0" width="2" height="16" fill="#000"/><path d="M12 0H14V2H13V1H12Z" fill="#000"/><rect x="4" y="4" width="8" height="8" fill="#13649a"/><rect x="5" y="5" width="6" height="6" fill="#2a8fd2"/><path d="M5 5H11V8H10V7H9V8H8V7H7V6H6V7H5Z" fill="#b4f2ff"/><path d="M9 8H10V9H11V10H10V9H9Z" fill="#90e0f8"/></svg>
<div class="t" style="left:769px;top:424px;letter-spacing:-0.19px">Image_0019.jpg</div>
<div class="ab" style="left:708px;top:439px;width:16px;height:16px;background:#e3e3e3;"></div>
<div class="ab" style="left:708px;top:455px;width:16px;height:1px;background:#ffffff;"></div>
<div class="ab" style="left:724px;top:439px;width:251px;height:17px;background:#f7f7f7;"></div>
<div class="ab" style="left:734px;top:444px;width:8px;height:10px;background:#fdfdfd;"></div>
<div class="ab" style="left:734px;top:443px;width:8px;height:1px;background:#a0a0a0;"></div>
<div class="ab" style="left:732px;top:447px;width:1px;height:6px;background:#a0a0a0;"></div>
<svg style="left:726px;top:439px" width="8" height="8" viewBox="0 0 8 8"><path d="M2.6 0.6H5.4L7.4 2.6V5.4L5.4 7.4H2.6L0.6 5.4V2.6Z" fill="#30d030" stroke="#000" stroke-width="1.2"/></svg>
<svg style="left:747px;top:440px" width="16" height="16" viewBox="0 0 16 16" shape-rendering="crispEdges"><rect x="2" y="0" width="12" height="16" fill="#e4f8fc"/><rect x="2" y="0" width="10" height="1" fill="#9aa8aa"/><rect x="2" y="15" width="12" height="1" fill="#8a9a9c"/><rect x="2" y="1" width="1" height="14" fill="#c0d0d2"/><rect x="0" y="0" width="2" height="16" fill="#000"/><rect x="14" y="0" width="2" height="16" fill="#000"/><path d="M12 0H14V2H13V1H12Z" fill="#000"/><rect x="4" y="4" width="8" height="8" fill="#13649a"/><rect x="5" y="5" width="6" height="6" fill="#2a8fd2"/><path d="M5 5H11V8H10V7H9V8H8V7H7V6H6V7H5Z" fill="#b4f2ff"/><path d="M9 8H10V9H11V10H10V9H9Z" fill="#90e0f8"/></svg>
<div class="t" style="left:769px;top:441px;letter-spacing:-0.19px">Image_0020.jpg</div>
<div class="ab" style="left:708px;top:456px;width:16px;height:16px;background:#e3e3e3;"></div>
<div class="ab" style="left:708px;top:472px;width:16px;height:1px;background:#ffffff;"></div>
<div class="ab" style="left:724px;top:456px;width:251px;height:17px;background:#f7f7f7;"></div>
<div class="ab" style="left:734px;top:461px;width:8px;height:10px;background:#fdfdfd;"></div>
<div class="ab" style="left:734px;top:460px;width:8px;height:1px;background:#a0a0a0;"></div>
<div class="ab" style="left:732px;top:464px;width:1px;height:6px;background:#a0a0a0;"></div>
<svg style="left:726px;top:456px" width="8" height="8" viewBox="0 0 8 8"><path d="M2.6 0.6H5.4L7.4 2.6V5.4L5.4 7.4H2.6L0.6 5.4V2.6Z" fill="#30d030" stroke="#000" stroke-width="1.2"/></svg>
<svg style="left:747px;top:457px" width="16" height="16" viewBox="0 0 16 16" shape-rendering="crispEdges"><rect x="2" y="0" width="12" height="16" fill="#e4f8fc"/><rect x="2" y="0" width="10" height="1" fill="#9aa8aa"/><rect x="2" y="15" width="12" height="1" fill="#8a9a9c"/><rect x="2" y="1" width="1" height="14" fill="#c0d0d2"/><rect x="0" y="0" width="2" height="16" fill="#000"/><rect x="14" y="0" width="2" height="16" fill="#000"/><path d="M12 0H14V2H13V1H12Z" fill="#000"/><rect x="4" y="4" width="8" height="8" fill="#13649a"/><rect x="5" y="5" width="6" height="6" fill="#2a8fd2"/><path d="M5 5H11V8H10V7H9V8H8V7H7V6H6V7H5Z" fill="#b4f2ff"/><path d="M9 8H10V9H11V10H10V9H9Z" fill="#90e0f8"/></svg>
<div class="t" style="left:769px;top:458px;letter-spacing:-0.19px">Image_0021.jpg</div>
<div class="ab" style="left:708px;top:473px;width:16px;height:16px;background:#e3e3e3;"></div>
<div class="ab" style="left:708px;top:489px;width:16px;height:1px;background:#ffffff;"></div>
<div class="ab" style="left:724px;top:473px;width:251px;height:17px;background:#f7f7f7;"></div>
<div class="ab" style="left:734px;top:478px;width:8px;height:10px;background:#fdfdfd;"></div>
<div class="ab" style="left:734px;top:477px;width:8px;height:1px;background:#a0a0a0;"></div>
<div class="ab" style="left:732px;top:481px;width:1px;height:6px;background:#a0a0a0;"></div>
<svg style="left:726px;top:473px" width="8" height="8" viewBox="0 0 8 8"><path d="M2.6 0.6H5.4L7.4 2.6V5.4L5.4 7.4H2.6L0.6 5.4V2.6Z" fill="#30d030" stroke="#000" stroke-width="1.2"/></svg>
<svg style="left:747px;top:474px" width="16" height="16" viewBox="0 0 16 16" shape-rendering="crispEdges"><rect x="2" y="0" width="12" height="16" fill="#e4f8fc"/><rect x="2" y="0" width="10" height="1" fill="#9aa8aa"/><rect x="2" y="15" width="12" height="1" fill="#8a9a9c"/><rect x="2" y="1" width="1" height="14" fill="#c0d0d2"/><rect x="0" y="0" width="2" height="16" fill="#000"/><rect x="14" y="0" width="2" height="16" fill="#000"/><path d="M12 0H14V2H13V1H12Z" fill="#000"/><rect x="4" y="4" width="8" height="8" fill="#13649a"/><rect x="5" y="5" width="6" height="6" fill="#2a8fd2"/><path d="M5 5H11V8H10V7H9V8H8V7H7V6H6V7H5Z" fill="#b4f2ff"/><path d="M9 8H10V9H11V10H10V9H9Z" fill="#90e0f8"/></svg>
<div class="t" style="left:769px;top:475px;letter-spacing:-0.19px">Image_0022.jpg</div>
<div class="ab" style="left:708px;top:490px;width:16px;height:16px;background:#e3e3e3;"></div>
<div class="ab" style="left:708px;top:506px;width:16px;height:1px;background:#ffffff;"></div>
<div class="ab" style="left:724px;top:490px;width:251px;height:17px;background:#f7f7f7;"></div>
<div class="ab" style="left:734px;top:495px;width:8px;height:10px;background:#fdfdfd;"></div>
<div class="ab" style="left:734px;top:494px;width:8px;height:1px;background:#a0a0a0;"></div>
<div class="ab" style="left:732px;top:498px;width:1px;height:6px;background:#a0a0a0;"></div>
<svg style="left:726px;top:490px" width="8" height="8" viewBox="0 0 8 8"><path d="M2.6 0.6H5.4L7.4 2.6V5.4L5.4 7.4H2.6L0.6 5.4V2.6Z" fill="#30d030" stroke="#000" stroke-width="1.2"/></svg>
<svg style="left:747px;top:491px" width="16" height="16" viewBox="0 0 16 16" shape-rendering="crispEdges"><rect x="2" y="0" width="12" height="16" fill="#e4f8fc"/><rect x="2" y="0" width="10" height="1" fill="#9aa8aa"/><rect x="2" y="15" width="12" height="1" fill="#8a9a9c"/><rect x="2" y="1" width="1" height="14" fill="#c0d0d2"/><rect x="0" y="0" width="2" height="16" fill="#000"/><rect x="14" y="0" width="2" height="16" fill="#000"/><path d="M12 0H14V2H13V1H12Z" fill="#000"/><rect x="4" y="4" width="8" height="8" fill="#13649a"/><rect x="5" y="5" width="6" height="6" fill="#2a8fd2"/><path d="M5 5H11V8H10V7H9V8H8V7H7V6H6V7H5Z" fill="#b4f2ff"/><path d="M9 8H10V9H11V10H10V9H9Z" fill="#90e0f8"/></svg>
<div class="t" style="left:769px;top:492px;letter-spacing:-0.19px">Image_0023.jpg</div>
<div class="ab" style="left:708px;top:507px;width:16px;height:16px;background:#e3e3e3;"></div>
<div class="ab" style="left:708px;top:523px;width:16px;height:1px;background:#ffffff;"></div>
<div class="ab" style="left:724px;top:507px;width:251px;height:17px;background:#f7f7f7;"></div>
<div class="ab" style="left:734px;top:512px;width:8px;height:10px;background:#fdfdfd;"></div>
<div class="ab" style="left:734px;top:511px;width:8px;height:1px;background:#a0a0a0;"></div>
<div class="ab" style="left:732px;top:515px;width:1px;height:6px;background:#a0a0a0;"></div>
<svg style="left:726px;top:507px" width="8" height="8" viewBox="0 0 8 8"><path d="M2.6 0.6H5.4L7.4 2.6V5.4L5.4 7.4H2.6L0.6 5.4V2.6Z" fill="#30d030" stroke="#000" stroke-width="1.2"/></svg>
<svg style="left:747px;top:508px" width="16" height="16" viewBox="0 0 16 16" shape-rendering="crispEdges"><rect x="2" y="0" width="12" height="16" fill="#e4f8fc"/><rect x="2" y="0" width="10" height="1" fill="#9aa8aa"/><rect x="2" y="15" width="12" height="1" fill="#8a9a9c"/><rect x="2" y="1" width="1" height="14" fill="#c0d0d2"/><rect x="0" y="0" width="2" height="16" fill="#000"/><rect x="14" y="0" width="2" height="16" fill="#000"/><path d="M12 0H14V2H13V1H12Z" fill="#000"/><rect x="4" y="4" width="8" height="8" fill="#13649a"/><rect x="5" y="5" width="6" height="6" fill="#2a8fd2"/><path d="M5 5H11V8H10V7H9V8H8V7H7V6H6V7H5Z" fill="#b4f2ff"/><path d="M9 8H10V9H11V10H10V9H9Z" fill="#90e0f8"/></svg>
<div class="t" style="left:769px;top:509px;letter-spacing:-0.19px">Image_0024.jpg</div>
<div class="ab" style="left:708px;top:524px;width:16px;height:16px;background:#e3e3e3;"></div>
<div class="ab" style="left:708px;top:540px;width:16px;height:1px;background:#ffffff;"></div>
<div class="ab" style="left:724px;top:524px;width:251px;height:17px;background:#f7f7f7;"></div>
<div class="ab" style="left:734px;top:529px;width:8px;height:10px;background:#fdfdfd;"></div>
<div class="ab" style="left:734px;top:528px;width:8px;height:1px;background:#a0a0a0;"></div>
<div class="ab" style="left:732px;top:532px;width:1px;height:6px;background:#a0a0a0;"></div>
<svg style="left:726px;top:524px" width="8" height="8" viewBox="0 0 8 8"><path d="M2.6 0.6H5.4L7.4 2.6V5.4L5.4 7.4H2.6L0.6 5.4V2.6Z" fill="#30d030" stroke="#000" stroke-width="1.2"/></svg>
<svg style="left:747px;top:525px" width="16" height="16" viewBox="0 0 16 16" shape-rendering="crispEdges"><rect x="2" y="0" width="12" height="16" fill="#e4f8fc"/><rect x="2" y="0" width="10" height="1" fill="#9aa8aa"/><rect x="2" y="15" width="12" height="1" fill="#8a9a9c"/><rect x="2" y="1" width="1" height="14" fill="#c0d0d2"/><rect x="0" y="0" width="2" height="16" fill="#000"/><rect x="14" y="0" width="2" height="16" fill="#000"/><path d="M12 0H14V2H13V1H12Z" fill="#000"/><rect x="4" y="4" width="8" height="8" fill="#13649a"/><rect x="5" y="5" width="6" height="6" fill="#2a8fd2"/><path d="M5 5H11V8H10V7H9V8H8V7H7V6H6V7H5Z" fill="#b4f2ff"/><path d="M9 8H10V9H11V10H10V9H9Z" fill="#90e0f8"/></svg>
<div class="t" style="left:769px;top:526px;letter-spacing:-0.19px">Image_0025.jpg</div>
<div class="ab" style="left:708px;top:541px;width:16px;height:16px;background:#e3e3e3;"></div>
<div class="ab" style="left:708px;top:557px;width:16px;height:1px;background:#ffffff;"></div>
<div class="ab" style="left:724px;top:541px;width:251px;height:17px;background:#f7f7f7;"></div>
<div class="ab" style="left:734px;top:546px;width:8px;height:10px;background:#fdfdfd;"></div>
<div class="ab" style="left:734px;top:545px;width:8px;height:1px;background:#a0a0a0;"></div>
<div class="ab" style="left:732px;top:549px;width:1px;height:6px;background:#a0a0a0;"></div>
<svg style="left:726px;top:541px" width="8" height="8" viewBox="0 0 8 8"><path d="M2.6 0.6H5.4L7.4 2.6V5.4L5.4 7.4H2.6L0.6 5.4V2.6Z" fill="#30d030" stroke="#000" stroke-width="1.2"/></svg>
<svg style="left:747px;top:542px" width="16" height="16" viewBox="0 0 16 16" shape-rendering="crispEdges"><rect x="2" y="0" width="12" height="16" fill="#e4f8fc"/><rect x="2" y="0" width="10" height="1" fill="#9aa8aa"/><rect x="2" y="15" width="12" height="1" fill="#8a9a9c"/><rect x="2" y="1" width="1" height="14" fill="#c0d0d2"/><rect x="0" y="0" width="2" height="16" fill="#000"/><rect x="14" y="0" width="2" height="16" fill="#000"/><path d="M12 0H14V2H13V1H12Z" fill="#000"/><rect x="4" y="4" width="8" height="8" fill="#13649a"/><rect x="5" y="5" width="6" height="6" fill="#2a8fd2"/><path d="M5 5H11V8H10V7H9V8H8V7H7V6H6V7H5Z" fill="#b4f2ff"/><path d="M9 8H10V9H11V10H10V9H9Z" fill="#90e0f8"/></svg>
<div class="t" style="left:769px;top:543px;letter-spacing:-0.19px">Image_0026.jpg</div>
<div class="ab" style="left:708px;top:558px;width:16px;height:16px;background:#e3e3e3;"></div>
<div class="ab" style="left:708px;top:574px;width:16px;height:1px;background:#ffffff;"></div>
<div class="ab" style="left:724px;top:558px;width:251px;height:17px;background:#f7f7f7;"></div>
<div class="ab" style="left:734px;top:563px;width:8px;height:10px;background:#fdfdfd;"></div>
<div class="ab" style="left:734px;top:562px;width:8px;height:1px;background:#a0a0a0;"></div>
<div class="ab" style="left:732px;top:566px;width:1px;height:6px;background:#a0a0a0;"></div>
<svg style="left:726px;top:558px" width="8" height="8" viewBox="0 0 8 8"><path d="M2.6 0.6H5.4L7.4 2.6V5.4L5.4 7.4H2.6L0.6 5.4V2.6Z" fill="#30d030" stroke="#000" stroke-width="1.2"/></svg>
<svg style="left:747px;top:559px" width="16" height="16" viewBox="0 0 16 16" shape-rendering="crispEdges"><rect x="2" y="0" width="12" height="16" fill="#e4f8fc"/><rect x="2" y="0" width="10" height="1" fill="#9aa8aa"/><rect x="2" y="15" width="12" height="1" fill="#8a9a9c"/><rect x="2" y="1" width="1" height="14" fill="#c0d0d2"/><rect x="0" y="0" width="2" height="16" fill="#000"/><rect x="14" y="0" width="2" height="16" fill="#000"/><path d="M12 0H14V2H13V1H12Z" fill="#000"/><rect x="4" y="4" width="8" height="8" fill="#13649a"/><rect x="5" y="5" width="6" height="6" fill="#2a8fd2"/><path d="M5 5H11V8H10V7H9V8H8V7H7V6H6V7H5Z" fill="#b4f2ff"/><path d="M9 8H10V9H11V10H10V9H9Z" fill="#90e0f8"/></svg>
<div class="t" style="left:769px;top:560px;letter-spacing:-0.19px">Image_0027.jpg</div>
<div class="ab" style="left:708px;top:575px;width:16px;height:16px;background:#e3e3e3;"></div>
<div class="ab" style="left:708px;top:591px;width:16px;height:1px;background:#ffffff;"></div>
<div class="ab" style="left:724px;top:575px;width:251px;height:17px;background:#f7f7f7;"></div>
<div class="ab" style="left:734px;top:580px;width:8px;height:10px;background:#fdfdfd;"></div>
<div class="ab" style="left:734px;top:579px;width:8px;height:1px;background:#a0a0a0;"></div>
<div class="ab" style="left:732px;top:583px;width:1px;height:6px;background:#a0a0a0;"></div>
<svg style="left:726px;top:575px" width="8" height="8" viewBox="0 0 8 8"><path d="M2.6 0.6H5.4L7.4 2.6V5.4L5.4 7.4H2.6L0.6 5.4V2.6Z" fill="#30d030" stroke="#000" stroke-width="1.2"/></svg>
<svg style="left:747px;top:576px" width="16" height="16" viewBox="0 0 16 16" shape-rendering="crispEdges"><rect x="2" y="0" width="12" height="16" fill="#e4f8fc"/><rect x="2" y="0" width="10" height="1" fill="#9aa8aa"/><rect x="2" y="15" width="12" height="1" fill="#8a9a9c"/><rect x="2" y="1" width="1" height="14" fill="#c0d0d2"/><rect x="0" y="0" width="2" height="16" fill="#000"/><rect x="14" y="0" width="2" height="16" fill="#000"/><path d="M12 0H14V2H13V1H12Z" fill="#000"/><rect x="4" y="4" width="8" height="8" fill="#13649a"/><rect x="5" y="5" width="6" height="6" fill="#2a8fd2"/><path d="M5 5H11V8H10V7H9V8H8V7H7V6H6V7H5Z" fill="#b4f2ff"/><path d="M9 8H10V9H11V10H10V9H9Z" fill="#90e0f8"/></svg>
<div class="t" style="left:769px;top:577px;letter-spacing:-0.19px">Image_0028.jpg</div>
<div class="ab" style="left:708px;top:592px;width:16px;height:16px;background:#e3e3e3;"></div>
<div class="ab" style="left:708px;top:608px;width:16px;height:1px;background:#ffffff;"></div>
<div class="ab" style="left:724px;top:592px;width:251px;height:17px;background:#f7f7f7;"></div>
<div class="ab" style="left:734px;top:597px;width:8px;height:10px;background:#fdfdfd;"></div>
<div class="ab" style="left:734px;top:596px;width:8px;height:1px;background:#a0a0a0;"></div>
<div class="ab" style="left:732px;top:600px;width:1px;height:6px;background:#a0a0a0;"></div>
<svg style="left:726px;top:592px" width="8" height="8" viewBox="0 0 8 8"><path d="M2.6 0.6H5.4L7.4 2.6V5.4L5.4 7.4H2.6L0.6 5.4V2.6Z" fill="#30d030" stroke="#000" stroke-width="1.2"/></svg>
<svg style="left:747px;top:593px" width="16" height="16" viewBox="0 0 16 16" shape-rendering="crispEdges"><rect x="2" y="0" width="12" height="16" fill="#e4f8fc"/><rect x="2" y="0" width="10" height="1" fill="#9aa8aa"/><rect x="2" y="15" width="12" height="1" fill="#8a9a9c"/><rect x="2" y="1" width="1" height="14" fill="#c0d0d2"/><rect x="0" y="0" width="2" height="16" fill="#000"/><rect x="14" y="0" width="2" height="16" fill="#000"/><path d="M12 0H14V2H13V1H12Z" fill="#000"/><rect x="4" y="4" width="8" height="8" fill="#13649a"/><rect x="5" y="5" width="6" height="6" fill="#2a8fd2"/><path d="M5 5H11V8H10V7H9V8H8V7H7V6H6V7H5Z" fill="#b4f2ff"/><path d="M9 8H10V9H11V10H10V9H9Z" fill="#90e0f8"/></svg>
<div class="t" style="left:769px;top:594px;letter-spacing:-0.19px">Image_0029.jpg</div>
<div class="ab" style="left:708px;top:609px;width:16px;height:16px;background:#e3e3e3;"></div>
<div class="ab" style="left:708px;top:625px;width:16px;height:1px;background:#ffffff;"></div>
<div class="ab" style="left:724px;top:609px;width:251px;height:17px;background:#f7f7f7;"></div>
<div class="ab" style="left:734px;top:614px;width:8px;height:10px;background:#fdfdfd;"></div>
<div class="ab" style="left:734px;top:613px;width:8px;height:1px;background:#a0a0a0;"></div>
<div class="ab" style="left:732px;top:617px;width:1px;height:6px;background:#a0a0a0;"></div>
<svg style="left:726px;top:609px" width="8" height="8" viewBox="0 0 8 8"><path d="M2.6 0.6H5.4L7.4 2.6V5.4L5.4 7.4H2.6L0.6 5.4V2.6Z" fill="#30d030" stroke="#000" stroke-width="1.2"/></svg>
<svg style="left:747px;top:610px" width="16" height="16" viewBox="0 0 16 16" shape-rendering="crispEdges"><rect x="2" y="0" width="12" height="16" fill="#e4f8fc"/><rect x="2" y="0" width="10" height="1" fill="#9aa8aa"/><rect x="2" y="15" width="12" height="1" fill="#8a9a9c"/><rect x="2" y="1" width="1" height="14" fill="#c0d0d2"/><rect x="0" y="0" width="2" height="16" fill="#000"/><rect x="14" y="0" width="2" height="16" fill="#000"/><path d="M12 0H14V2H13V1H12Z" fill="#000"/><rect x="4" y="4" width="8" height="8" fill="#13649a"/><rect x="5" y="5" width="6" height="6" fill="#2a8fd2"/><path d="M5 5H11V8H10V7H9V8H8V7H7V6H6V7H5Z" fill="#b4f2ff"/><path d="M9 8H10V9H11V10H10V9H9Z" fill="#90e0f8"/></svg>
<div class="t" style="left:769px;top:611px;letter-spacing:-0.19px">Image_0030.jpg</div>
<div class="ab" style="left:708px;top:626px;width:16px;height:16px;background:#e3e3e3;"></div>
<div class="ab" style="left:708px;top:642px;width:16px;height:1px;background:#ffffff;"></div>
<div class="ab" style="left:724px;top:626px;width:251px;height:17px;background:#f7f7f7;"></div>
<div class="ab" style="left:734px;top:631px;width:8px;height:10px;background:#fdfdfd;"></div>
<div class="ab" style="left:734px;top:630px;width:8px;height:1px;background:#a0a0a0;"></div>
<div class="ab" style="left:732px;top:634px;width:1px;height:6px;background:#a0a0a0;"></div>
<svg style="left:726px;top:626px" width="8" height="8" viewBox="0 0 8 8"><path d="M2.6 0.6H5.4L7.4 2.6V5.4L5.4 7.4H2.6L0.6 5.4V2.6Z" fill="#30d030" stroke="#000" stroke-width="1.2"/></svg>
<svg style="left:747px;top:627px" width="16" height="16" viewBox="0 0 16 16" shape-rendering="crispEdges"><rect x="2" y="0" width="12" height="16" fill="#e4f8fc"/><rect x="2" y="0" width="10" height="1" fill="#9aa8aa"/><rect x="2" y="15" width="12" height="1" fill="#8a9a9c"/><rect x="2" y="1" width="1" height="14" fill="#c0d0d2"/><rect x="0" y="0" width="2" height="16" fill="#000"/><rect x="14" y="0" width="2" height="16" fill="#000"/><path d="M12 0H14V2H13V1H12Z" fill="#000"/><rect x="4" y="4" width="8" height="8" fill="#13649a"/><rect x="5" y="5" width="6" height="6" fill="#2a8fd2"/><path d="M5 5H11V8H10V7H9V8H8V7H7V6H6V7H5Z" fill="#b4f2ff"/><path d="M9 8H10V9H11V10H10V9H9Z" fill="#90e0f8"/></svg>
<div class="t" style="left:769px;top:628px;letter-spacing:-0.19px">Image_0031.jpg</div>
<div class="ab" style="left:708px;top:643px;width:16px;height:16px;background:#e3e3e3;"></div>
<div class="ab" style="left:708px;top:659px;width:16px;height:1px;background:#ffffff;"></div>
<div class="ab" style="left:724px;top:643px;width:251px;height:17px;background:#f7f7f7;"></div>
<div class="ab" style="left:734px;top:648px;width:8px;height:10px;background:#fdfdfd;"></div>
<div class="ab" style="left:734px;top:647px;width:8px;height:1px;background:#a0a0a0;"></div>
<div class="ab" style="left:732px;top:651px;width:1px;height:6px;background:#a0a0a0;"></div>
<svg style="left:726px;top:643px" width="8" height="8" viewBox="0 0 8 8"><path d="M2.6 0.6H5.4L7.4 2.6V5.4L5.4 7.4H2.6L0.6 5.4V2.6Z" fill="#30d030" stroke="#000" stroke-width="1.2"/></svg>
<svg style="left:747px;top:644px" width="16" height="16" viewBox="0 0 16 16" shape-rendering="crispEdges"><rect x="2" y="0" width="12" height="16" fill="#e4f8fc"/><rect x="2" y="0" width="10" height="1" fill="#9aa8aa"/><rect x="2" y="15" width="12" height="1" fill="#8a9a9c"/><rect x="2" y="1" width="1" height="14" fill="#c0d0d2"/><rect x="0" y="0" width="2" height="16" fill="#000"/><rect x="14" y="0" width="2" height="16" fill="#000"/><path d="M12 0H14V2H13V1H12Z" fill="#000"/><rect x="4" y="4" width="8" height="8" fill="#13649a"/><rect x="5" y="5" width="6" height="6" fill="#2a8fd2"/><path d="M5 5H11V8H10V7H9V8H8V7H7V6H6V7H5Z" fill="#b4f2ff"/><path d="M9 8H10V9H11V10H10V9H9Z" fill="#90e0f8"/></svg>
<div class="t" style="left:769px;top:645px;letter-spacing:-0.19px">Image_0032.jpg</div>
<div class="ab" style="left:708px;top:660px;width:16px;height:16px;background:#e3e3e3;"></div>
<div class="ab" style="left:708px;top:676px;width:16px;height:1px;background:#ffffff;"></div>
<div class="ab" style="left:724px;top:660px;width:251px;height:17px;background:#f7f7f7;"></div>
<div class="ab" style="left:734px;top:665px;width:8px;height:10px;background:#fdfdfd;"></div>
<div class="ab" style="left:734px;top:664px;width:8px;height:1px;background:#a0a0a0;"></div>
<div class="ab" style="left:732px;top:668px;width:1px;height:6px;background:#a0a0a0;"></div>
<svg style="left:726px;top:660px" width="8" height="8" viewBox="0 0 8 8"><path d="M2.6 0.6H5.4L7.4 2.6V5.4L5.4 7.4H2.6L0.6 5.4V2.6Z" fill="#30d030" stroke="#000" stroke-width="1.2"/></svg>
<svg style="left:747px;top:661px" width="16" height="16" viewBox="0 0 16 16" shape-rendering="crispEdges"><rect x="2" y="0" width="12" height="16" fill="#e4f8fc"/><rect x="2" y="0" width="10" height="1" fill="#9aa8aa"/><rect x="2" y="15" width="12" height="1" fill="#8a9a9c"/><rect x="2" y="1" width="1" height="14" fill="#c0d0d2"/><rect x="0" y="0" width="2" height="16" fill="#000"/><rect x="14" y="0" width="2" height="16" fill="#000"/><path d="M12 0H14V2H13V1H12Z" fill="#000"/><rect x="4" y="4" width="8" height="8" fill="#13649a"/><rect x="5" y="5" width="6" height="6" fill="#2a8fd2"/><path d="M5 5H11V8H10V7H9V8H8V7H7V6H6V7H5Z" fill="#b4f2ff"/><path d="M9 8H10V9H11V10H10V9H9Z" fill="#90e0f8"/></svg>
<div class="t" style="left:769px;top:662px;letter-spacing:-0.19px">Image_0033.jpg</div>
<div class="ab" style="left:708px;top:677px;width:16px;height:16px;background:#e3e3e3;"></div>
<div class="ab" style="left:708px;top:693px;width:16px;height:1px;background:#ffffff;"></div>
<div class="ab" style="left:724px;top:677px;width:251px;height:17px;background:#f7f7f7;"></div>
<div class="ab" style="left:734px;top:682px;width:8px;height:10px;background:#fdfdfd;"></div>
<div class="ab" style="left:734px;top:681px;width:8px;height:1px;background:#a0a0a0;"></div>
<div class="ab" style="left:732px;top:685px;width:1px;height:6px;background:#a0a0a0;"></div>
<svg style="left:726px;top:677px" width="8" height="8" viewBox="0 0 8 8"><path d="M2.6 0.6H5.4L7.4 2.6V5.4L5.4 7.4H2.6L0.6 5.4V2.6Z" fill="#30d030" stroke="#000" stroke-width="1.2"/></svg>
<svg style="left:747px;top:678px" width="16" height="16" viewBox="0 0 16 16" shape-rendering="crispEdges"><rect x="2" y="0" width="12" height="16" fill="#e4f8fc"/><rect x="2" y="0" width="10" height="1" fill="#9aa8aa"/><rect x="2" y="15" width="12" height="1" fill="#8a9a9c"/><rect x="2" y="1" width="1" height="14" fill="#c0d0d2"/><rect x="0" y="0" width="2" height="16" fill="#000"/><rect x="14" y="0" width="2" height="16" fill="#000"/><path d="M12 0H14V2H13V1H12Z" fill="#000"/><rect x="4" y="4" width="8" height="8" fill="#13649a"/><rect x="5" y="5" width="6" height="6" fill="#2a8fd2"/><path d="M5 5H11V8H10V7H9V8H8V7H7V6H6V7H5Z" fill="#b4f2ff"/><path d="M9 8H10V9H11V10H10V9H9Z" fill="#90e0f8"/></svg>
<div class="t" style="left:769px;top:679px;letter-spacing:-0.19px">Image_0034.jpg</div>
<div class="ab" style="left:708px;top:694px;width:16px;height:16px;background:#e3e3e3;"></div>
<div class="ab" style="left:708px;top:710px;width:16px;height:1px;background:#ffffff;"></div>
<div class="ab" style="left:724px;top:694px;width:251px;height:17px;background:#f7f7f7;"></div>
<div class="ab" style="left:734px;top:699px;width:8px;height:10px;background:#fdfdfd;"></div>
<div class="ab" style="left:734px;top:698px;width:8px;height:1px;background:#a0a0a0;"></div>
<div class="ab" style="left:732px;top:702px;width:1px;height:6px;background:#a0a0a0;"></div>
<svg style="left:726px;top:694px" width="8" height="8" viewBox="0 0 8 8"><path d="M2.6 0.6H5.4L7.4 2.6V5.4L5.4 7.4H2.6L0.6 5.4V2.6Z" fill="#30d030" stroke="#000" stroke-width="1.2"/></svg>
<svg style="left:747px;top:695px" width="16" height="16" viewBox="0 0 16 16" shape-rendering="crispEdges"><rect x="2" y="0" width="12" height="16" fill="#e4f8fc"/><rect x="2" y="0" width="10" height="1" fill="#9aa8aa"/><rect x="2" y="15" width="12" height="1" fill="#8a9a9c"/><rect x="2" y="1" width="1" height="14" fill="#c0d0d2"/><rect x="0" y="0" width="2" height="16" fill="#000"/><rect x="14" y="0" width="2" height="16" fill="#000"/><path d="M12 0H14V2H13V1H12Z" fill="#000"/><rect x="4" y="4" width="8" height="8" fill="#13649a"/><rect x="5" y="5" width="6" height="6" fill="#2a8fd2"/><path d="M5 5H11V8H10V7H9V8H8V7H7V6H6V7H5Z" fill="#b4f2ff"/><path d="M9 8H10V9H11V10H10V9H9Z" fill="#90e0f8"/></svg>
<div class="t" style="left:769px;top:696px;letter-spacing:-0.19px">Image_0035.jpg</div>
<div class="ab" style="left:708px;top:711px;width:16px;height:16px;background:#e3e3e3;"></div>
<div class="ab" style="left:708px;top:727px;width:16px;height:1px;background:#ffffff;"></div>
<div class="ab" style="left:724px;top:711px;width:251px;height:17px;background:#f7f7f7;"></div>
<div class="ab" style="left:734px;top:716px;width:8px;height:10px;background:#fdfdfd;"></div>
<div class="ab" style="left:734px;top:715px;width:8px;height:1px;background:#a0a0a0;"></div>
<div class="ab" style="left:732px;top:719px;width:1px;height:6px;background:#a0a0a0;"></div>
<svg style="left:726px;top:711px" width="8" height="8" viewBox="0 0 8 8"><path d="M2.6 0.6H5.4L7.4 2.6V5.4L5.4 7.4H2.6L0.6 5.4V2.6Z" fill="#30d030" stroke="#000" stroke-width="1.2"/></svg>
<svg style="left:747px;top:712px" width="16" height="16" viewBox="0 0 16 16" shape-rendering="crispEdges"><rect x="2" y="0" width="12" height="16" fill="#e4f8fc"/><rect x="2" y="0" width="10" height="1" fill="#9aa8aa"/><rect x="2" y="15" width="12" height="1" fill="#8a9a9c"/><rect x="2" y="1" width="1" height="14" fill="#c0d0d2"/><rect x="0" y="0" width="2" height="16" fill="#000"/><rect x="14" y="0" width="2" height="16" fill="#000"/><path d="M12 0H14V2H13V1H12Z" fill="#000"/><rect x="4" y="4" width="8" height="8" fill="#13649a"/><rect x="5" y="5" width="6" height="6" fill="#2a8fd2"/><path d="M5 5H11V8H10V7H9V8H8V7H7V6H6V7H5Z" fill="#b4f2ff"/><path d="M9 8H10V9H11V10H10V9H9Z" fill="#90e0f8"/></svg>
<div class="t" style="left:769px;top:713px;letter-spacing:-0.19px">Image_0036.jpg</div>
<div class="ab" style="left:708px;top:728px;width:16px;height:16px;background:#e3e3e3;"></div>
<div class="ab" style="left:708px;top:744px;width:16px;height:1px;background:#ffffff;"></div>
<div class="ab" style="left:724px;top:728px;width:251px;height:17px;background:#f7f7f7;"></div>
<div class="ab" style="left:734px;top:733px;width:8px;height:10px;background:#fdfdfd;"></div>
<div class="ab" style="left:734px;top:732px;width:8px;height:1px;background:#a0a0a0;"></div>
<div class="ab" style="left:732px;top:736px;width:1px;height:6px;background:#a0a0a0;"></div>
<svg style="left:726px;top:728px" width="8" height="8" viewBox="0 0 8 8"><path d="M2.6 0.6H5.4L7.4 2.6V5.4L5.4 7.4H2.6L0.6 5.4V2.6Z" fill="#30d030" stroke="#000" stroke-width="1.2"/></svg>
<svg style="left:747px;top:729px" width="16" height="16" viewBox="0 0 16 16" shape-rendering="crispEdges"><rect x="2" y="0" width="12" height="16" fill="#e4f8fc"/><rect x="2" y="0" width="10" height="1" fill="#9aa8aa"/><rect x="2" y="15" width="12" height="1" fill="#8a9a9c"/><rect x="2" y="1" width="1" height="14" fill="#c0d0d2"/><rect x="0" y="0" width="2" height="16" fill="#000"/><rect x="14" y="0" width="2" height="16" fill="#000"/><path d="M12 0H14V2H13V1H12Z" fill="#000"/><rect x="4" y="4" width="8" height="8" fill="#13649a"/><rect x="5" y="5" width="6" height="6" fill="#2a8fd2"/><path d="M5 5H11V8H10V7H9V8H8V7H7V6H6V7H5Z" fill="#b4f2ff"/><path d="M9 8H10V9H11V10H10V9H9Z" fill="#90e0f8"/></svg>
<div class="t" style="left:769px;top:730px;letter-spacing:-0.19px">Image_0037.jpg</div>
<div class="ab" style="left:708px;top:745px;width:16px;height:16px;background:#e3e3e3;"></div>
<div class="ab" style="left:708px;top:761px;width:16px;height:1px;background:#ffffff;"></div>
<div class="ab" style="left:724px;top:745px;width:251px;height:17px;background:#f7f7f7;"></div>
<div class="ab" style="left:734px;top:750px;width:8px;height:10px;background:#fdfdfd;"></div>
<div class="ab" style="left:734px;top:749px;width:8px;height:1px;background:#a0a0a0;"></div>
<div class="ab" style="left:732px;top:753px;width:1px;height:6px;background:#a0a0a0;"></div>
<svg style="left:726px;top:745px" width="8" height="8" viewBox="0 0 8 8"><path d="M2.6 0.6H5.4L7.4 2.6V5.4L5.4 7.4H2.6L0.6 5.4V2.6Z" fill="#30d030" stroke="#000" stroke-width="1.2"/></svg>
<svg style="left:747px;top:746px" width="16" height="16" viewBox="0 0 16 16" shape-rendering="crispEdges"><rect x="2" y="0" width="12" height="16" fill="#e4f8fc"/><rect x="2" y="0" width="10" height="1" fill="#9aa8aa"/><rect x="2" y="15" width="12" height="1" fill="#8a9a9c"/><rect x="2" y="1" width="1" height="14" fill="#c0d0d2"/><rect x="0" y="0" width="2" height="16" fill="#000"/><rect x="14" y="0" width="2" height="16" fill="#000"/><path d="M12 0H14V2H13V1H12Z" fill="#000"/><rect x="4" y="4" width="8" height="8" fill="#13649a"/><rect x="5" y="5" width="6" height="6" fill="#2a8fd2"/><path d="M5 5H11V8H10V7H9V8H8V7H7V6H6V7H5Z" fill="#b4f2ff"/><path d="M9 8H10V9H11V10H10V9H9Z" fill="#90e0f8"/></svg>
<div class="t" style="left:769px;top:747px;letter-spacing:-0.19px">Image_0038.jpg</div>
<div class="ab" style="left:708px;top:762px;width:16px;height:16px;background:#e3e3e3;"></div>
<div class="ab" style="left:708px;top:778px;width:16px;height:1px;background:#ffffff;"></div>
<div class="ab" style="left:724px;top:762px;width:251px;height:17px;background:#f7f7f7;"></div>
<div class="ab" style="left:734px;top:767px;width:8px;height:10px;background:#fdfdfd;"></div>
<div class="ab" style="left:734px;top:766px;width:8px;height:1px;background:#a0a0a0;"></div>
<div class="ab" style="left:732px;top:770px;width:1px;height:6px;background:#a0a0a0;"></div>
<svg style="left:726px;top:762px" width="8" height="8" viewBox="0 0 8 8"><path d="M2.6 0.6H5.4L7.4 2.6V5.4L5.4 7.4H2.6L0.6 5.4V2.6Z" fill="#30d030" stroke="#000" stroke-width="1.2"/></svg>
<svg style="left:747px;top:763px" width="16" height="16" viewBox="0 0 16 16" shape-rendering="crispEdges"><rect x="2" y="0" width="12" height="16" fill="#e4f8fc"/><rect x="2" y="0" width="10" height="1" fill="#9aa8aa"/><rect x="2" y="15" width="12" height="1" fill="#8a9a9c"/><rect x="2" y="1" width="1" height="14" fill="#c0d0d2"/><rect x="0" y="0" width="2" height="16" fill="#000"/><rect x="14" y="0" width="2" height="16" fill="#000"/><path d="M12 0H14V2H13V1H12Z" fill="#000"/><rect x="4" y="4" width="8" height="8" fill="#13649a"/><rect x="5" y="5" width="6" height="6" fill="#2a8fd2"/><path d="M5 5H11V8H10V7H9V8H8V7H7V6H6V7H5Z" fill="#b4f2ff"/><path d="M9 8H10V9H11V10H10V9H9Z" fill="#90e0f8"/></svg>
<div class="t" style="left:769px;top:764px;letter-spacing:-0.19px">Image_0039.jpg</div>
<div class="ab" style="left:708px;top:779px;width:16px;height:16px;background:#e3e3e3;"></div>
<div class="ab" style="left:708px;top:795px;width:16px;height:1px;background:#ffffff;"></div>
<div class="ab" style="left:724px;top:779px;width:251px;height:17px;background:#f7f7f7;"></div>
<div class="ab" style="left:734px;top:784px;width:8px;height:10px;background:#fdfdfd;"></div>
<div class="ab" style="left:734px;top:783px;width:8px;height:1px;background:#a0a0a0;"></div>
<div class="ab" style="left:732px;top:787px;width:1px;height:6px;background:#a0a0a0;"></div>
<svg style="left:726px;top:779px" width="8" height="8" viewBox="0 0 8 8"><path d="M2.6 0.6H5.4L7.4 2.6V5.4L5.4 7.4H2.6L0.6 5.4V2.6Z" fill="#30d030" stroke="#000" stroke-width="1.2"/></svg>
<svg style="left:747px;top:780px" width="16" height="16" viewBox="0 0 16 16" shape-rendering="crispEdges"><rect x="2" y="0" width="12" height="16" fill="#e4f8fc"/><rect x="2" y="0" width="10" height="1" fill="#9aa8aa"/><rect x="2" y="15" width="12" height="1" fill="#8a9a9c"/><rect x="2" y="1" width="1" height="14" fill="#c0d0d2"/><rect x="0" y="0" width="2" height="16" fill="#000"/><rect x="14" y="0" width="2" height="16" fill="#000"/><path d="M12 0H14V2H13V1H12Z" fill="#000"/><rect x="4" y="4" width="8" height="8" fill="#13649a"/><rect x="5" y="5" width="6" height="6" fill="#2a8fd2"/><path d="M5 5H11V8H10V7H9V8H8V7H7V6H6V7H5Z" fill="#b4f2ff"/><path d="M9 8H10V9H11V10H10V9H9Z" fill="#90e0f8"/></svg>
<div class="t" style="left:769px;top:781px;letter-spacing:-0.19px">Image_0040.jpg</div>
<div class="ab" style="left:708px;top:796px;width:16px;height:16px;background:#e3e3e3;"></div>
<div class="ab" style="left:708px;top:812px;width:16px;height:1px;background:#ffffff;"></div>
<div class="ab" style="left:724px;top:796px;width:251px;height:17px;background:#f7f7f7;"></div>
<div class="ab" style="left:734px;top:801px;width:8px;height:10px;background:#fdfdfd;"></div>
<div class="ab" style="left:734px;top:800px;width:8px;height:1px;background:#a0a0a0;"></div>
<div class="ab" style="left:732px;top:804px;width:1px;height:6px;background:#a0a0a0;"></div>
<svg style="left:726px;top:796px" width="8" height="8" viewBox="0 0 8 8"><path d="M2.6 0.6H5.4L7.4 2.6V5.4L5.4 7.4H2.6L0.6 5.4V2.6Z" fill="#30d030" stroke="#000" stroke-width="1.2"/></svg>
<svg style="left:747px;top:797px" width="16" height="16" viewBox="0 0 16 16" shape-rendering="crispEdges"><rect x="2" y="0" width="12" height="16" fill="#e4f8fc"/><rect x="2" y="0" width="10" height="1" fill="#9aa8aa"/><rect x="2" y="15" width="12" height="1" fill="#8a9a9c"/><rect x="2" y="1" width="1" height="14" fill="#c0d0d2"/><rect x="0" y="0" width="2" height="16" fill="#000"/><rect x="14" y="0" width="2" height="16" fill="#000"/><path d="M12 0H14V2H13V1H12Z" fill="#000"/><rect x="4" y="4" width="8" height="8" fill="#13649a"/><rect x="5" y="5" width="6" height="6" fill="#2a8fd2"/><path d="M5 5H11V8H10V7H9V8H8V7H7V6H6V7H5Z" fill="#b4f2ff"/><path d="M9 8H10V9H11V10H10V9H9Z" fill="#90e0f8"/></svg>
<div class="t" style="left:769px;top:798px;letter-spacing:-0.19px">Image_0041.jpg</div>
<div class="ab" style="left:708px;top:813px;width:16px;height:16px;background:#e3e3e3;"></div>
<div class="ab" style="left:708px;top:829px;width:16px;height:1px;background:#ffffff;"></div>
<div class="ab" style="left:724px;top:813px;width:251px;height:17px;background:#f7f7f7;"></div>
<div class="ab" style="left:734px;top:818px;width:8px;height:10px;background:#fdfdfd;"></div>
<div class="ab" style="left:734px;top:817px;width:8px;height:1px;background:#a0a0a0;"></div>
<div class="ab" style="left:732px;top:821px;width:1px;height:6px;background:#a0a0a0;"></div>
<svg style="left:726px;top:813px" width="8" height="8" viewBox="0 0 8 8"><path d="M2.6 0.6H5.4L7.4 2.6V5.4L5.4 7.4H2.6L0.6 5.4V2.6Z" fill="#30d030" stroke="#000" stroke-width="1.2"/></svg>
<svg style="left:747px;top:814px" width="16" height="16" viewBox="0 0 16 16" shape-rendering="crispEdges"><rect x="2" y="0" width="12" height="16" fill="#e4f8fc"/><rect x="2" y="0" width="10" height="1" fill="#9aa8aa"/><rect x="2" y="15" width="12" height="1" fill="#8a9a9c"/><rect x="2" y="1" width="1" height="14" fill="#c0d0d2"/><rect x="0" y="0" width="2" height="16" fill="#000"/><rect x="14" y="0" width="2" height="16" fill="#000"/><path d="M12 0H14V2H13V1H12Z" fill="#000"/><rect x="4" y="4" width="8" height="8" fill="#13649a"/><rect x="5" y="5" width="6" height="6" fill="#2a8fd2"/><path d="M5 5H11V8H10V7H9V8H8V7H7V6H6V7H5Z" fill="#b4f2ff"/><path d="M9 8H10V9H11V10H10V9H9Z" fill="#90e0f8"/></svg>
<div class="t" style="left:769px;top:815px;letter-spacing:-0.19px">Image_0042.jpg</div>
</body></html>
